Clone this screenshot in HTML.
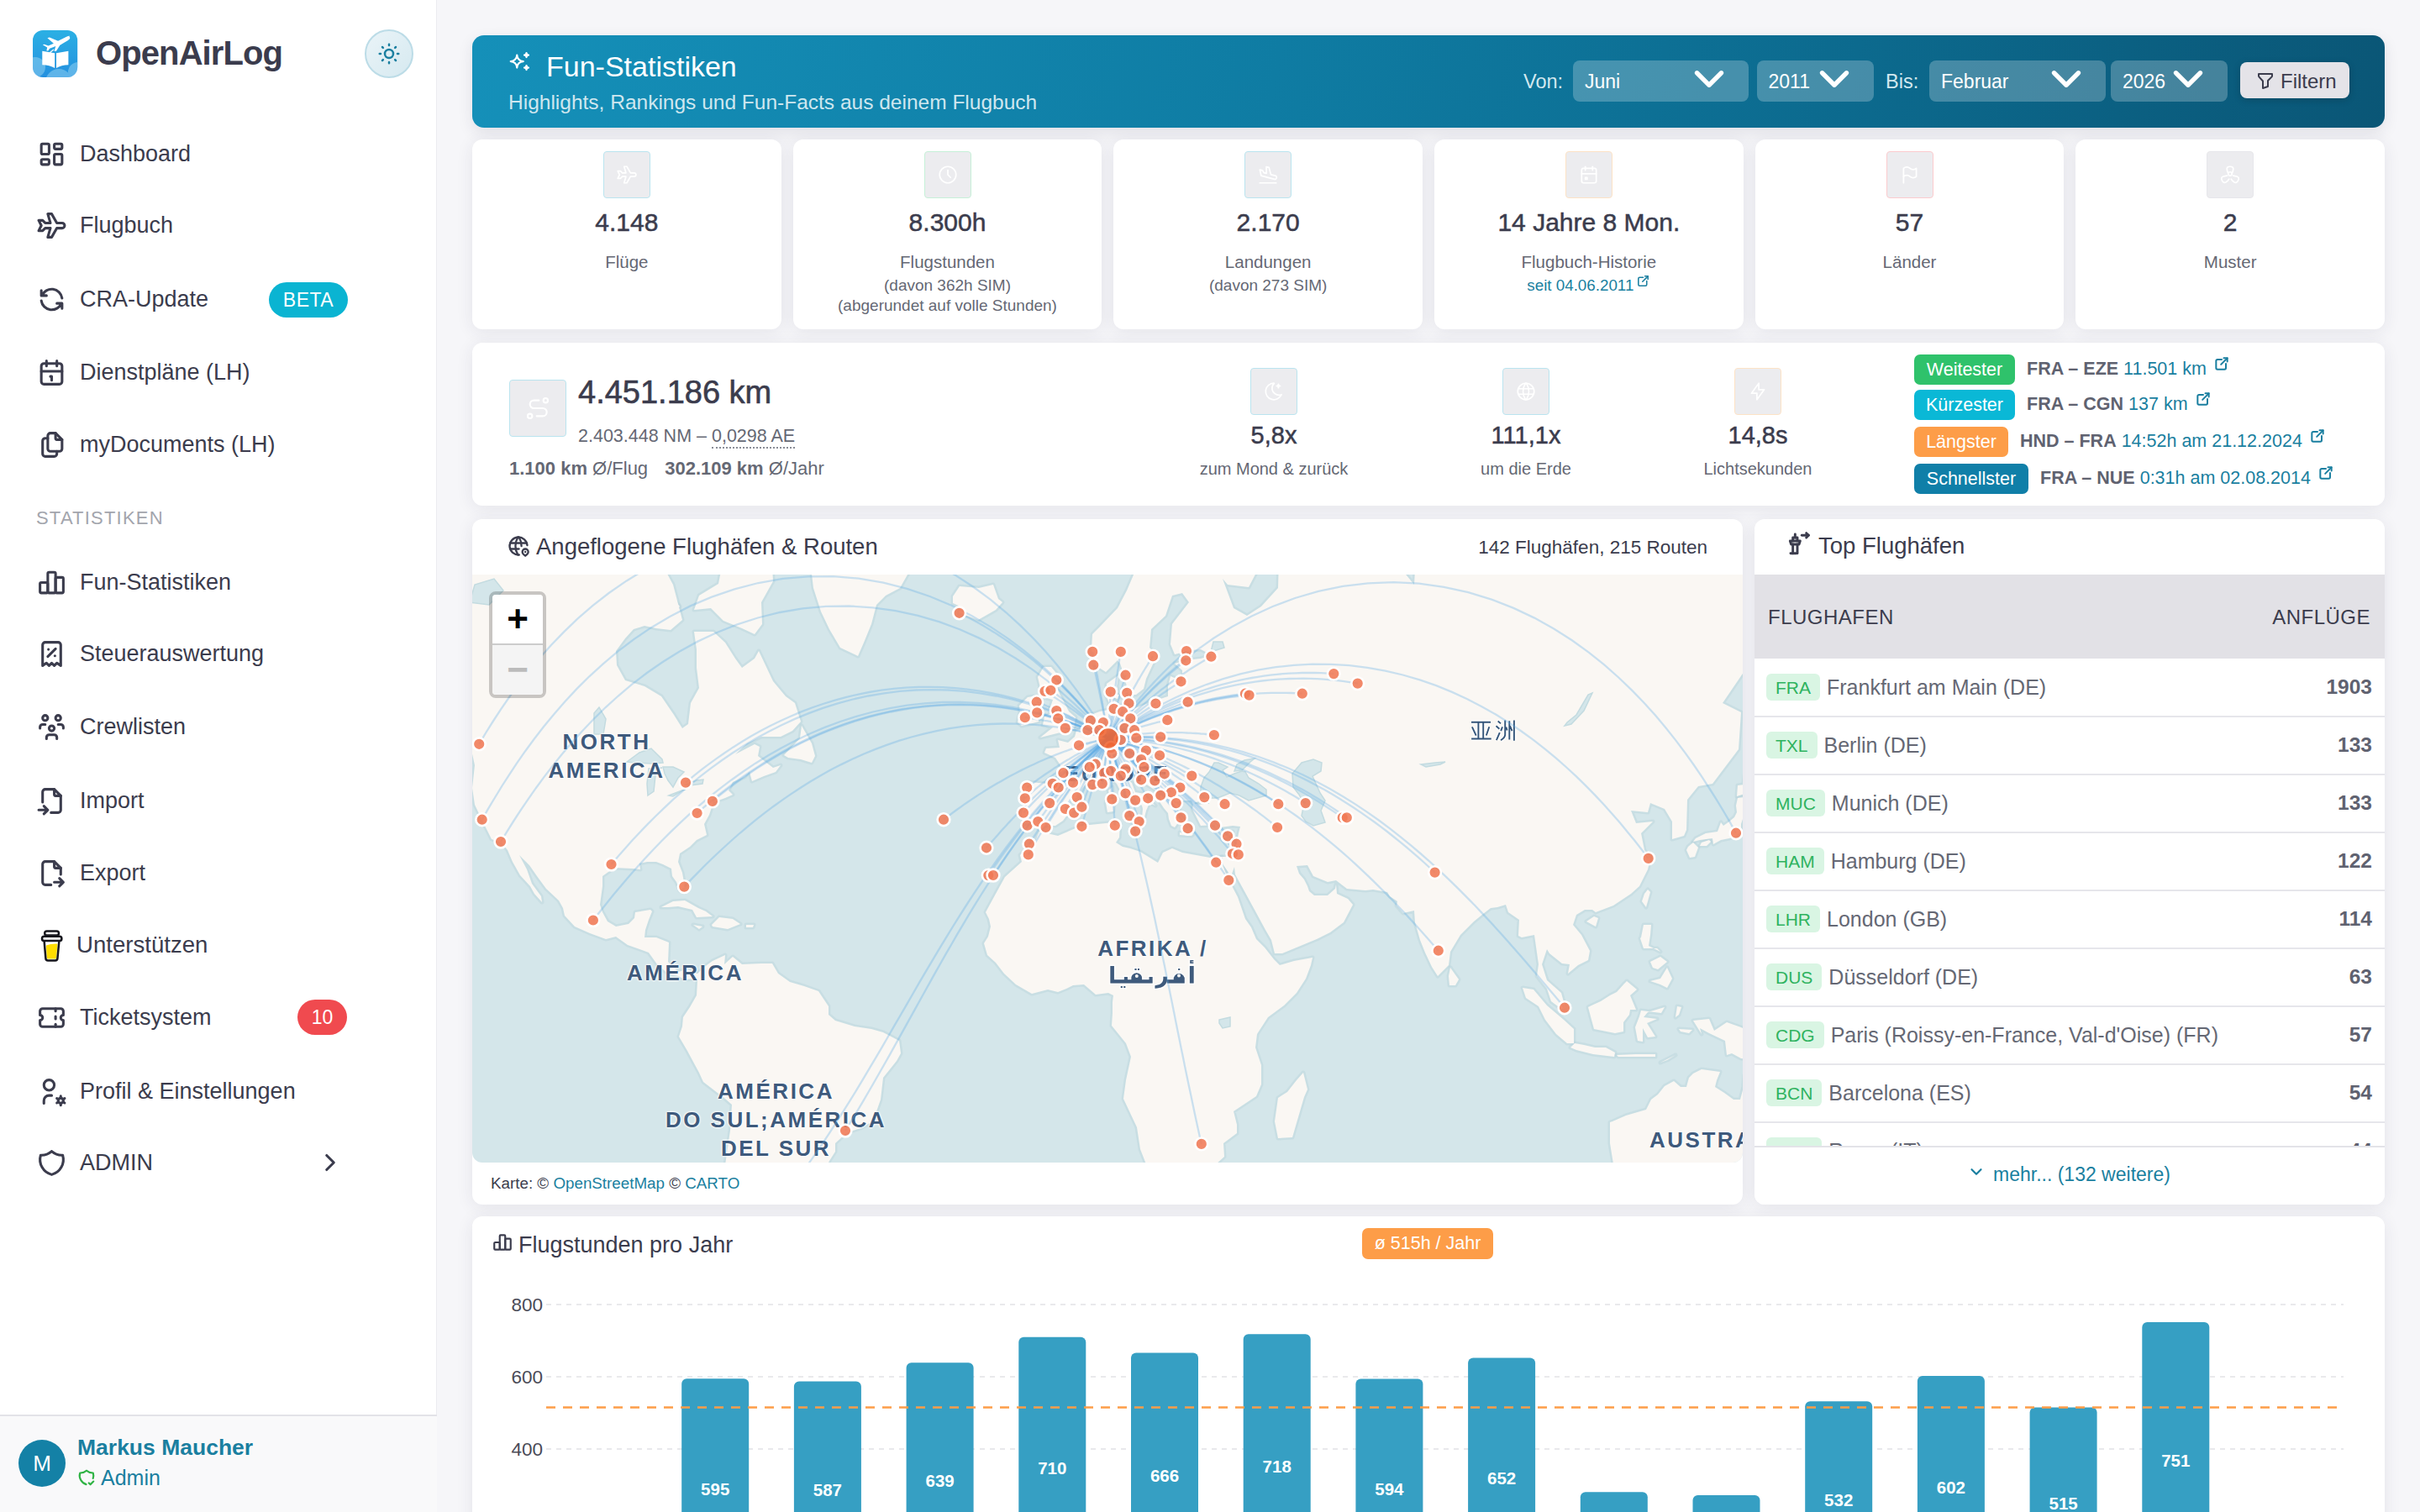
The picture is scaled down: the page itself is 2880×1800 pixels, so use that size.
<!DOCTYPE html><html><head><meta charset="utf-8"><style>
*{margin:0;padding:0;box-sizing:border-box}
html,body{margin:0;overflow:hidden;background:#f6f6f9;font-family:"Liberation Sans", sans-serif}
#root{position:relative;width:2880px;height:1800px;overflow:hidden;transform-origin:0 0;background:#f6f6f9}
.t{position:absolute;white-space:nowrap}
.ic{position:absolute;overflow:visible}
#sb{position:absolute;left:0;top:0;width:520px;height:1800px;background:#fff;border-right:1px solid #ececf0}
.pill{position:absolute;border-radius:21px;color:#fff;text-align:center}
#banner{position:absolute;left:562px;top:42px;width:2276px;height:110px;border-radius:14px;background:linear-gradient(100deg,#1590b9 0%,#0f7ca3 42%,#0c6a8e 72%,#0a5676 100%);box-shadow:0 6px 18px rgba(40,40,70,.10)}
.sel{position:absolute;top:72px;height:49px;border-radius:8px;background:rgba(255,255,255,.24)}
#filt{position:absolute;left:2666px;top:74px;width:129.5px;height:43px;border-radius:8px;background:#e4e3e8;box-shadow:0 2px 8px rgba(0,0,0,.18)}
.card{position:absolute;background:#fff;border-radius:12px;box-shadow:0 3px 20px rgba(40,40,80,.09)}
.ibox{position:absolute;background:#ececef;border:1.5px solid;border-radius:4px;opacity:.95}
.badge{position:absolute;border-radius:7px;color:#fff;font-size:21.5px;line-height:36px;text-align:center}
#map{position:absolute;left:562px;top:684px;width:1512px;height:700px;overflow:hidden;border-radius:0 0 12px 12px}
.ml{position:absolute;color:#3e5a7c;font-weight:700;font-size:26px;line-height:34px;text-align:center;letter-spacing:2.5px;text-shadow:0 0 3px #fff,0 0 3px #fff,0 0 2px #fff}
#zoomc{position:absolute;left:20px;top:20px;width:68px;height:127px;border:4px solid rgba(0,0,0,.2);border-radius:8px;background-clip:padding-box;overflow:hidden}
#zin,#zout{height:59.5px;text-align:center;font-size:44px;line-height:58px;font-weight:700}
#zin{background:#fff;color:#000;border-bottom:2px solid #ccc}
#zout{background:#f4f4f4;color:#bbb}
.row{position:absolute;left:14px;height:34px;display:flex;align-items:center;white-space:nowrap}
.code{height:32px;padding:0 11px;border-radius:6px;background:#d9f5e3;color:#2fb35f;font-size:21px;line-height:34px}
.nm{margin-left:8px;font-size:25px;color:#656874}
</style></head><body><div id="root"><div id="sb"><svg class="ic" style="left:38.6px;top:36px;width:53.2px;height:56px" viewBox="0 0 53.2 56">
<defs><linearGradient id="lg" x1="0" y1="0" x2="0" y2="1"><stop offset="0" stop-color="#2bb0e4"/><stop offset="1" stop-color="#2490df"/></linearGradient>
<clipPath id="lc"><rect width="53.2" height="56" rx="12"/></clipPath></defs>
<rect width="53.2" height="56" rx="12" fill="url(#lg)"/>
<g clip-path="url(#lc)" fill="#8fd0f0" opacity=".55"><circle cx="3" cy="44" r="12"/><circle cx="31" cy="62" r="16"/><circle cx="54" cy="50" r="12"/></g>
<path d="M11.3 24.8l14.9 2.5v17.8c-4-2.4-9-3.8-14.9-3.9z" fill="#fff"/>
<path d="M28 27.3l14.4-2.5v16.4c-5.6.1-10.4 1.5-14.4 3.9z" fill="#fff"/>
<path d="M43.2 7.8c1.8 .6 1.4 2.6-1.2 4.2l-9.6 5.8l-4.6 7.1l-2.3-.2l1.8-5.6l-7.2 2.6l-1.9 2.8l-1.8-.2l.8-3.7l-5.4-3.3l1.9-.6l4.8 1.9l6.4-2.8l-7.5-6.6l2.5-.8l10.2 4.4l10.6-5.3c1.4-.6 2.6-.8 3.5-.5z" fill="#fff"/>
<path d="M25 23c-5 3-8.5 8-9.5 14" stroke="#fff" stroke-width="1.3" fill="none"/>
</svg><div class="t " style="left:114px;top:35.0px;font-size:40px;line-height:56px;color:#3b3c4d;font-weight:700;letter-spacing:-0.9px;">OpenAirLog</div><div style="position:absolute;left:434px;top:34.5px;width:58px;height:58px;border-radius:50%;background:linear-gradient(135deg,#eaf4f8,#d6e9f0);border:2px solid #bcdce7"></div><svg class="ic" style="left:448px;top:48.5px;width:30px;height:30px" viewBox="0 0 24 24" fill="none" stroke="#1a7fa0" stroke-width="2" stroke-linecap="round" stroke-linejoin="round"><path d="M8 12a4 4 0 1 0 8 0a4 4 0 1 0 -8 0"/><path d="M3 12h1m8 -9v1m8 8h1m-9 8v1m-6.4 -15.4l.7 .7m12.1 -.7l-.7 .7m0 11.4l.7 .7m-12.1 -.7l-.7 .7"/></svg><svg class="ic" style="left:42.5px;top:164.5px;width:37px;height:37px" viewBox="0 0 24 24" fill="none" stroke="#3b3c4d" stroke-width="2" stroke-linecap="round" stroke-linejoin="round"><path d="M5 4h4a1 1 0 0 1 1 1v6a1 1 0 0 1 -1 1h-4a1 1 0 0 1 -1 -1v-6a1 1 0 0 1 1 -1"/><path d="M5 16h4a1 1 0 0 1 1 1v2a1 1 0 0 1 -1 1h-4a1 1 0 0 1 -1 -1v-2a1 1 0 0 1 1 -1"/><path d="M15 12h4a1 1 0 0 1 1 1v6a1 1 0 0 1 -1 1h-4a1 1 0 0 1 -1 -1v-6a1 1 0 0 1 1 -1"/><path d="M15 4h4a1 1 0 0 1 1 1v2a1 1 0 0 1 -1 1h-4a1 1 0 0 1 -1 -1v-2a1 1 0 0 1 1 -1"/></svg><div class="t " style="left:95px;top:164.5px;font-size:27px;line-height:37px;color:#3b3c4d;font-weight:400;">Dashboard</div><svg class="ic" style="left:42.5px;top:249.5px;width:37px;height:37px" viewBox="0 0 24 24" fill="none" stroke="#3b3c4d" stroke-width="2" stroke-linecap="round" stroke-linejoin="round"><path d="M16 10h4a2 2 0 0 1 0 4h-4l-4 7h-3l2 -7h-4l-2 2h-3l2 -4l-2 -4h3l2 2h4l-2 -7h3z"/></svg><div class="t " style="left:95px;top:249.5px;font-size:27px;line-height:37px;color:#3b3c4d;font-weight:400;">Flugbuch</div><svg class="ic" style="left:42.5px;top:337.5px;width:37px;height:37px" viewBox="0 0 24 24" fill="none" stroke="#3b3c4d" stroke-width="2" stroke-linecap="round" stroke-linejoin="round"><path d="M20 11a8.1 8.1 0 0 0 -15.5 -2m-.5 -4v4h4"/><path d="M4 13a8.1 8.1 0 0 0 15.5 2m.5 4v-4h-4"/></svg><div class="t " style="left:95px;top:337.5px;font-size:27px;line-height:37px;color:#3b3c4d;font-weight:400;">CRA-Update</div><svg class="ic" style="left:42.5px;top:424.5px;width:37px;height:37px" viewBox="0 0 24 24" fill="none" stroke="#3b3c4d" stroke-width="2" stroke-linecap="round" stroke-linejoin="round"><path d="M4 7a2 2 0 0 1 2 -2h12a2 2 0 0 1 2 2v12a2 2 0 0 1 -2 2h-12a2 2 0 0 1 -2 -2z"/><path d="M16 3v4"/><path d="M8 3v4"/><path d="M4 11h16"/><path d="M11 15h1v3"/></svg><div class="t " style="left:95px;top:424.5px;font-size:27px;line-height:37px;color:#3b3c4d;font-weight:400;">Dienstpläne (LH)</div><svg class="ic" style="left:42.5px;top:510.5px;width:37px;height:37px" viewBox="0 0 24 24" fill="none" stroke="#3b3c4d" stroke-width="2" stroke-linecap="round" stroke-linejoin="round"><path d="M15 3v4a1 1 0 0 0 1 1h4"/><path d="M18 17h-7a2 2 0 0 1 -2 -2v-10a2 2 0 0 1 2 -2h4l5 5v7a2 2 0 0 1 -2 2z"/><path d="M16 17v2a2 2 0 0 1 -2 2h-7a2 2 0 0 1 -2 -2v-10a2 2 0 0 1 2 -2h2"/></svg><div class="t " style="left:95px;top:510.5px;font-size:27px;line-height:37px;color:#3b3c4d;font-weight:400;">myDocuments (LH)</div><svg class="ic" style="left:42.5px;top:674.5px;width:37px;height:37px" viewBox="0 0 24 24" fill="none" stroke="#3b3c4d" stroke-width="2" stroke-linecap="round" stroke-linejoin="round"><path d="M3 13a1 1 0 0 1 1 -1h4a1 1 0 0 1 1 1v6a1 1 0 0 1 -1 1h-4a1 1 0 0 1 -1 -1z"/><path d="M15 9a1 1 0 0 1 1 -1h4a1 1 0 0 1 1 1v10a1 1 0 0 1 -1 1h-4a1 1 0 0 1 -1 -1z"/><path d="M9 5a1 1 0 0 1 1 -1h4a1 1 0 0 1 1 1v14a1 1 0 0 1 -1 1h-4a1 1 0 0 1 -1 -1z"/></svg><div class="t " style="left:95px;top:674.5px;font-size:27px;line-height:37px;color:#3b3c4d;font-weight:400;">Fun-Statistiken</div><svg class="ic" style="left:42.5px;top:760.0px;width:37px;height:37px" viewBox="0 0 24 24" fill="none" stroke="#3b3c4d" stroke-width="2" stroke-linecap="round" stroke-linejoin="round"><path d="M9 14l6 -6"/><path d="M9.5 8.5v.01"/><path d="M14.5 13.5v.01"/><path d="M5 21v-16a2 2 0 0 1 2 -2h10a2 2 0 0 1 2 2v16l-3 -2l-2 2l-2 -2l-2 2l-2 -2l-3 2"/></svg><div class="t " style="left:95px;top:760.0px;font-size:27px;line-height:37px;color:#3b3c4d;font-weight:400;">Steuerauswertung</div><svg class="ic" style="left:42.5px;top:846.5px;width:37px;height:37px" viewBox="0 0 24 24" fill="none" stroke="#3b3c4d" stroke-width="2" stroke-linecap="round" stroke-linejoin="round"><path d="M10 13a2 2 0 1 0 4 0a2 2 0 0 0 -4 0"/><path d="M8 21v-1a2 2 0 0 1 2 -2h4a2 2 0 0 1 2 2v1"/><path d="M15 5a2 2 0 1 0 4 0a2 2 0 0 0 -4 0"/><path d="M17 10h2a2 2 0 0 1 2 2v1"/><path d="M5 5a2 2 0 1 0 4 0a2 2 0 0 0 -4 0"/><path d="M3 13v-1a2 2 0 0 1 2 -2h2"/></svg><div class="t " style="left:95px;top:846.5px;font-size:27px;line-height:37px;color:#3b3c4d;font-weight:400;">Crewlisten</div><svg class="ic" style="left:42.5px;top:934.5px;width:37px;height:37px" viewBox="0 0 24 24" fill="none" stroke="#3b3c4d" stroke-width="2" stroke-linecap="round" stroke-linejoin="round"><path d="M14 3v4a1 1 0 0 0 1 1h4"/><path d="M5 13v-8a2 2 0 0 1 2 -2h7l5 5v11a2 2 0 0 1 -2 2h-5.5m-9.5 -2h7m-3 -3l3 3l-3 3"/></svg><div class="t " style="left:95px;top:934.5px;font-size:27px;line-height:37px;color:#3b3c4d;font-weight:400;">Import</div><svg class="ic" style="left:42.5px;top:1020.5px;width:37px;height:37px" viewBox="0 0 24 24" fill="none" stroke="#3b3c4d" stroke-width="2" stroke-linecap="round" stroke-linejoin="round"><path d="M14 3v4a1 1 0 0 0 1 1h4"/><path d="M11.5 21h-4.5a2 2 0 0 1 -2 -2v-14a2 2 0 0 1 2 -2h7l5 5v5m-5 6h7m-3 -3l3 3l-3 3"/></svg><div class="t " style="left:95px;top:1020.5px;font-size:27px;line-height:37px;color:#3b3c4d;font-weight:400;">Export</div><svg class="ic" style="left:42.5px;top:1192.5px;width:37px;height:37px" viewBox="0 0 24 24" fill="none" stroke="#3b3c4d" stroke-width="2" stroke-linecap="round" stroke-linejoin="round"><path d="M15 5v2"/><path d="M15 11v2"/><path d="M15 17v2"/><path d="M5 5h14a2 2 0 0 1 2 2v3a2 2 0 0 0 0 4v3a2 2 0 0 1 -2 2h-14a2 2 0 0 1 -2 -2v-3a2 2 0 0 0 0 -4v-3a2 2 0 0 1 2 -2"/></svg><div class="t " style="left:95px;top:1192.5px;font-size:27px;line-height:37px;color:#3b3c4d;font-weight:400;">Ticketsystem</div><svg class="ic" style="left:42.5px;top:1280.5px;width:37px;height:37px" viewBox="0 0 24 24" fill="none" stroke="#3b3c4d" stroke-width="2" stroke-linecap="round" stroke-linejoin="round"><path d="M6 21v-2a4 4 0 0 1 4 -4h2"/><path d="M6 7a4 4 0 1 0 8 0a4 4 0 0 0 -8 0"/><path d="M19 19m-2 0a2 2 0 1 0 4 0a2 2 0 1 0 -4 0"/><path d="M19 15.5v1.5"/><path d="M19 21v1.5"/><path d="M22 17.25l-1.3 .75"/><path d="M17.3 20l-1.3 .75"/><path d="M16 17.25l1.3 .75"/><path d="M20.7 20l1.3 .75"/></svg><div class="t " style="left:95px;top:1280.5px;font-size:27px;line-height:37px;color:#3b3c4d;font-weight:400;">Profil &amp; Einstellungen</div><svg class="ic" style="left:42.5px;top:1365.5px;width:37px;height:37px" viewBox="0 0 24 24" fill="none" stroke="#3b3c4d" stroke-width="2" stroke-linecap="round" stroke-linejoin="round"><path d="M12 3a12 12 0 0 0 8.5 3a12 12 0 0 1 -8.5 15a12 12 0 0 1 -8.5 -15a12 12 0 0 0 8.5 -3"/></svg><div class="t " style="left:95px;top:1365.5px;font-size:27px;line-height:37px;color:#3b3c4d;font-weight:400;">ADMIN</div><svg class="ic" style="left:47px;top:1106px;width:28px;height:40px" viewBox="0 0 28 40" fill="none" stroke="#16161d" stroke-width="2.5" stroke-linejoin="round">
<path d="M8 19.5Q14 17 21.5 17.5L20.1 34.5Q20 35.6 18.8 35.6H10Q8.8 35.6 8.7 34.5Z" fill="#ffdd00" stroke="none"/>
<path d="M5.6 14.2L7.4 35.2Q7.6 37.4 10 37.4H18.8Q21.2 37.4 21.4 35.2L23.4 14.2"/>
<rect x="3" y="8.8" width="23.4" height="5.2" rx="2.6" fill="#fff"/>
<rect x="6.2" y="2.4" width="16.8" height="5.2" rx="2.6" fill="#fff"/>
</svg><div class="t " style="left:91px;top:1105.6px;font-size:27.6px;line-height:38px;color:#3b3c4d;font-weight:400;">Unterstützen</div><div class="t " style="left:43px;top:601.5px;font-size:22px;line-height:30px;color:#a3a5ad;font-weight:400;letter-spacing:1.2px;">STATISTIKEN</div><div class="pill" style="left:320px;top:336px;width:94px;height:42px;background:#0ab4d2;font-size:23px;line-height:42px;letter-spacing:.5px">BETA</div><div class="pill" style="left:354px;top:1190px;width:59px;height:42px;background:#f04a4f;font-size:23px;line-height:42px">10</div><svg class="ic" style="left:376px;top:1367px;width:34px;height:34px" viewBox="0 0 24 24" fill="none" stroke="#3b3c4d" stroke-width="2.2" stroke-linecap="round" stroke-linejoin="round"><path d="M9 6l6 6l-6 6"/></svg><div style="position:absolute;left:0;top:1684px;width:520px;height:116px;background:#f9f9fa;border-top:2px solid #e3e3e8"></div><div style="position:absolute;left:22px;top:1714px;width:56px;height:56px;border-radius:50%;background:#1481a6;color:#fff;font-size:26px;line-height:56px;text-align:center">M</div><div class="t " style="left:92px;top:1704.5px;font-size:26.5px;line-height:37px;color:#1a7fa0;font-weight:700;">Markus Maucher</div><svg class="ic" style="left:92px;top:1748px;width:22px;height:22px" viewBox="0 0 24 24" fill="none" stroke="#2fb344" stroke-width="2.4" stroke-linecap="round" stroke-linejoin="round"><path d="M11.46 20.846a12 12 0 0 1 -7.96 -14.846a12 12 0 0 0 8.5 -3a12 12 0 0 0 8.5 3a12 12 0 0 1 -.09 7.06"/><path d="M15 19l2 2l4 -4"/></svg><div class="t " style="left:120px;top:1742.0px;font-size:25px;line-height:35px;color:#1a7fa0;font-weight:400;">Admin</div></div><div id="banner"></div><svg class="ic" style="left:604px;top:58px;width:30px;height:30px" viewBox="0 0 24 24" fill="none" stroke="#ffffff" stroke-width="1.8" stroke-linecap="round" stroke-linejoin="round"><path d="M16 18a2 2 0 0 1 2 2a2 2 0 0 1 2 -2a2 2 0 0 1 -2 -2a2 2 0 0 1 -2 2zm0 -12a2 2 0 0 1 2 2a2 2 0 0 1 2 -2a2 2 0 0 1 -2 -2a2 2 0 0 1 -2 2zm-7 12a6 6 0 0 1 6 -6a6 6 0 0 1 -6 -6a6 6 0 0 1 -6 6a6 6 0 0 1 6 6z"/></svg><div class="t " style="left:650px;top:55.5px;font-size:34px;line-height:47px;color:#ffffff;font-weight:400;">Fun-Statistiken</div><div class="t " style="left:605px;top:105.0px;font-size:24.5px;line-height:34px;color:#cfe7ef;font-weight:400;">Highlights, Rankings und Fun-Facts aus deinem Flugbuch</div><div class="t " style="left:1813px;top:80.5px;font-size:23.5px;line-height:32px;color:#d3e8ef;font-weight:400;">Von:</div><div class="t " style="left:2244px;top:80.5px;font-size:23.5px;line-height:32px;color:#d3e8ef;font-weight:400;">Bis:</div><div class="sel" style="left:1872px;width:209px"></div><div class="t " style="left:1886px;top:80.5px;font-size:23px;line-height:32px;color:#ffffff;font-weight:400;">Juni</div><svg class="ic" style="left:2005px;top:64.9px;width:58px;height:58px" viewBox="0 0 24 24" fill="none" stroke="#ffffff" stroke-width="2.2" stroke-linecap="round" stroke-linejoin="round"><path d="M6 9l6 6l6 -6"/></svg><div class="sel" style="left:2090.5px;width:139px"></div><div class="t " style="left:2104.5px;top:80.5px;font-size:23px;line-height:32px;color:#ffffff;font-weight:400;">2011</div><svg class="ic" style="left:2153.5px;top:64.9px;width:58px;height:58px" viewBox="0 0 24 24" fill="none" stroke="#ffffff" stroke-width="2.2" stroke-linecap="round" stroke-linejoin="round"><path d="M6 9l6 6l6 -6"/></svg><div class="sel" style="left:2296px;width:209.5px"></div><div class="t " style="left:2310px;top:80.5px;font-size:23px;line-height:32px;color:#ffffff;font-weight:400;">Februar</div><svg class="ic" style="left:2429.5px;top:64.9px;width:58px;height:58px" viewBox="0 0 24 24" fill="none" stroke="#ffffff" stroke-width="2.2" stroke-linecap="round" stroke-linejoin="round"><path d="M6 9l6 6l6 -6"/></svg><div class="sel" style="left:2512px;width:139px"></div><div class="t " style="left:2526px;top:80.5px;font-size:23px;line-height:32px;color:#ffffff;font-weight:400;">2026</div><svg class="ic" style="left:2575px;top:64.9px;width:58px;height:58px" viewBox="0 0 24 24" fill="none" stroke="#ffffff" stroke-width="2.2" stroke-linecap="round" stroke-linejoin="round"><path d="M6 9l6 6l6 -6"/></svg><div id="filt"></div><svg class="ic" style="left:2684px;top:84px;width:24px;height:24px" viewBox="0 0 24 24" fill="none" stroke="#3b3c4d" stroke-width="2" stroke-linecap="round" stroke-linejoin="round"><path d="M4 4h16v2.172a2 2 0 0 1 -.586 1.414l-4.414 4.414v7l-6 2v-8.5l-4.48 -4.928a2 2 0 0 1 -.52 -1.345v-2.227z"/></svg><div class="t " style="left:2714px;top:79.5px;font-size:24px;line-height:33px;color:#3b3c4d;font-weight:400;">Filtern</div><div class="card" style="left:562.0px;top:166px;width:367.7px;height:226px"></div><div class="ibox" style="left:717.8px;top:180px;width:56px;height:56px;border-color:#b7e3ef"></div><svg class="ic" style="left:732.8333333333334px;top:195px;width:26px;height:26px" viewBox="0 0 24 24" fill="none" stroke="#ffffff" stroke-width="1.6" stroke-linecap="round" stroke-linejoin="round"><path d="M16 10h4a2 2 0 0 1 0 4h-4l-4 7h-3l2 -7h-4l-2 2h-3l2 -4l-2 -4h3l2 2h4l-2 -7h3z"/></svg><div class="t " style="left:145.83333333333337px;width:1200px;text-align:center;top:244.0px;font-size:30px;line-height:42px;color:#3b3c4d;font-weight:400;-webkit-text-stroke:.5px #3b3c4d;">4.148</div><div class="t " style="left:145.83333333333337px;width:1200px;text-align:center;top:297.5px;font-size:20.5px;line-height:28px;color:#656874;font-weight:400;">Flüge</div><div class="card" style="left:943.7px;top:166px;width:367.7px;height:226px"></div><div class="ibox" style="left:1099.5px;top:180px;width:56px;height:56px;border-color:#c4f0d6"></div><svg class="ic" style="left:1114.5px;top:195px;width:26px;height:26px" viewBox="0 0 24 24" fill="none" stroke="#ffffff" stroke-width="1.6" stroke-linecap="round" stroke-linejoin="round"><path d="M3 12a9 9 0 1 0 18 0a9 9 0 0 0 -18 0"/><path d="M12 7v5l3 3"/></svg><div class="t " style="left:527.5px;width:1200px;text-align:center;top:244.0px;font-size:30px;line-height:42px;color:#3b3c4d;font-weight:400;-webkit-text-stroke:.5px #3b3c4d;">8.300h</div><div class="t " style="left:527.5px;width:1200px;text-align:center;top:297.5px;font-size:20.5px;line-height:28px;color:#656874;font-weight:400;">Flugstunden</div><div class="t " style="left:527.5px;width:1200px;text-align:center;top:326.5px;font-size:19px;line-height:26px;color:#656874;font-weight:400;">(davon 362h SIM)</div><div class="t " style="left:527.5px;width:1200px;text-align:center;top:350.5px;font-size:19px;line-height:26px;color:#656874;font-weight:400;">(abgerundet auf volle Stunden)</div><div class="card" style="left:1325.3px;top:166px;width:367.7px;height:226px"></div><div class="ibox" style="left:1481.2px;top:180px;width:56px;height:56px;border-color:#b7e3ef"></div><svg class="ic" style="left:1496.1666666666667px;top:195px;width:26px;height:26px" viewBox="0 0 24 24" fill="none" stroke="#ffffff" stroke-width="1.6" stroke-linecap="round" stroke-linejoin="round"><path d="M15.157 11.81l4.83 1.295a2 2 0 1 1 -1.036 3.863l-14.489 -3.882l-1.345 -6.572l2.898 .776l1.414 2.45l2.898 .776l-.12 -7.279l2.898 .777l2.052 7.797z"/><path d="M3 21h18"/></svg><div class="t " style="left:909.1666666666667px;width:1200px;text-align:center;top:244.0px;font-size:30px;line-height:42px;color:#3b3c4d;font-weight:400;-webkit-text-stroke:.5px #3b3c4d;">2.170</div><div class="t " style="left:909.1666666666667px;width:1200px;text-align:center;top:297.5px;font-size:20.5px;line-height:28px;color:#656874;font-weight:400;">Landungen</div><div class="t " style="left:909.1666666666667px;width:1200px;text-align:center;top:326.5px;font-size:19px;line-height:26px;color:#656874;font-weight:400;">(davon 273 SIM)</div><div class="card" style="left:1707.0px;top:166px;width:367.7px;height:226px"></div><div class="ibox" style="left:1862.8px;top:180px;width:56px;height:56px;border-color:#fde1c4"></div><svg class="ic" style="left:1877.8333333333333px;top:195px;width:26px;height:26px" viewBox="0 0 24 24" fill="none" stroke="#ffffff" stroke-width="1.6" stroke-linecap="round" stroke-linejoin="round"><path d="M4 7a2 2 0 0 1 2 -2h12a2 2 0 0 1 2 2v12a2 2 0 0 1 -2 2h-12a2 2 0 0 1 -2 -2z"/><path d="M16 3v4"/><path d="M8 3v4"/><path d="M4 11h16"/><path d="M8 15h2v2h-2z"/></svg><div class="t " style="left:1290.8333333333333px;width:1200px;text-align:center;top:244.0px;font-size:30px;line-height:42px;color:#3b3c4d;font-weight:400;-webkit-text-stroke:.5px #3b3c4d;">14 Jahre 8 Mon.</div><div class="t " style="left:1290.8333333333333px;width:1200px;text-align:center;top:297.5px;font-size:20.5px;line-height:28px;color:#656874;font-weight:400;">Flugbuch-Historie</div><div class="t " style="left:1280.8333333333333px;width:1200px;text-align:center;top:326.5px;font-size:18.8px;line-height:26px;color:#1a7fa0;font-weight:400;">seit 04.06.2011</div><svg class="ic" style="left:1946.8333333333333px;top:325.5px;width:17px;height:17px" viewBox="0 0 24 24" fill="none" stroke="#1a7fa0" stroke-width="2.2" stroke-linecap="round" stroke-linejoin="round"><path d="M12 6h-6a2 2 0 0 0 -2 2v10a2 2 0 0 0 2 2h10a2 2 0 0 0 2 -2v-6"/><path d="M11 13l9 -9"/><path d="M15 4h5v5"/></svg><div class="card" style="left:2088.7px;top:166px;width:367.7px;height:226px"></div><div class="ibox" style="left:2244.5px;top:180px;width:56px;height:56px;border-color:#fbc9cc"></div><svg class="ic" style="left:2259.5000000000005px;top:195px;width:26px;height:26px" viewBox="0 0 24 24" fill="none" stroke="#ffffff" stroke-width="1.6" stroke-linecap="round" stroke-linejoin="round"><path d="M5 5a5 5 0 0 1 7 0a5 5 0 0 0 7 0v9a5 5 0 0 1 -7 0a5 5 0 0 0 -7 0v-9z"/><path d="M5 21v-7"/></svg><div class="t " style="left:1672.5000000000005px;width:1200px;text-align:center;top:244.0px;font-size:30px;line-height:42px;color:#3b3c4d;font-weight:400;-webkit-text-stroke:.5px #3b3c4d;">57</div><div class="t " style="left:1672.5000000000005px;width:1200px;text-align:center;top:297.5px;font-size:20.5px;line-height:28px;color:#656874;font-weight:400;">Länder</div><div class="card" style="left:2470.3px;top:166px;width:367.7px;height:226px"></div><div class="ibox" style="left:2626.2px;top:180px;width:56px;height:56px;border-color:#e5e5ea"></div><svg class="ic" style="left:2641.166666666667px;top:195px;width:26px;height:26px" viewBox="0 0 24 24" fill="none" stroke="#ffffff" stroke-width="1.6" stroke-linecap="round" stroke-linejoin="round"><path d="M12 13a2 2 0 1 0 0 -4a2 2 0 0 0 0 4z"/><path d="M14.167 10.5c.722 -1.538 1.156 -3.043 1.303 -4.514c.22 -1.63 -.762 -2.986 -3.47 -2.986s-3.69 1.357 -3.47 2.986c.147 1.471 .581 2.976 1.303 4.514"/><path d="M13.169 16.751c.97 1.395 2.057 2.523 3.257 3.386c1.3 1.005 2.967 .833 4.321 -1.512c1.354 -2.345 .67 -3.874 -.85 -4.498c-1.348 -.608 -2.868 -.985 -4.562 -1.128"/><path d="M8.664 13c-1.693 .143 -3.213 .52 -4.56 1.128c-1.522 .623 -2.206 2.153 -.852 4.498s3.02 2.517 4.321 1.512c1.2 -.863 2.287 -1.991 3.258 -3.386"/></svg><div class="t " style="left:2054.166666666667px;width:1200px;text-align:center;top:244.0px;font-size:30px;line-height:42px;color:#3b3c4d;font-weight:400;-webkit-text-stroke:.5px #3b3c4d;">2</div><div class="t " style="left:2054.166666666667px;width:1200px;text-align:center;top:297.5px;font-size:20.5px;line-height:28px;color:#656874;font-weight:400;">Muster</div><div class="card" style="left:562px;top:408px;width:2276px;height:194px"></div><div class="ibox" style="left:606px;top:452px;width:68px;height:68px;border-color:#b7e3ef"></div><svg class="ic" style="left:624px;top:470px;width:32px;height:32px" viewBox="0 0 24 24" fill="none" stroke="#ffffff" stroke-width="1.6" stroke-linecap="round" stroke-linejoin="round"><path d="M3 19a2 2 0 1 0 4 0a2 2 0 0 0 -4 0"/><path d="M19 7a2 2 0 1 0 0 -4a2 2 0 0 0 0 4z"/><path d="M11 19h5.5a3.5 3.5 0 0 0 0 -7h-8a3.5 3.5 0 0 1 0 -7h4.5"/></svg><div class="t " style="left:688px;top:440.5px;font-size:38px;line-height:53px;color:#3b3c4d;font-weight:400;-webkit-text-stroke:.6px #3b3c4d;">4.451.186 km</div><div class="t " style="left:688px;top:503.5px;font-size:21.5px;line-height:30px;color:#656874;font-weight:400;">2.403.448 NM – <span style="border-bottom:2px dotted #8a8d97;padding-bottom:1px">0,0298 AE</span></div><div class="t " style="left:606px;top:543.0px;font-size:22px;line-height:30px;color:#656874;font-weight:400;"><b style="font-weight:700">1.100 km</b> Ø/Flug <span style="display:inline-block;width:14px"></span><b style="font-weight:700">302.109 km</b> Ø/Jahr</div><div class="ibox" style="left:1488px;top:438px;width:56px;height:56px;border-color:#b7e3ef"></div><svg class="ic" style="left:1503px;top:453px;width:26px;height:26px" viewBox="0 0 24 24" fill="none" stroke="#ffffff" stroke-width="1.6" stroke-linecap="round" stroke-linejoin="round"><path d="M12 3c.132 0 .263 0 .393 0a7.5 7.5 0 0 0 7.92 12.446a9 9 0 1 1 -8.313 -12.454z"/><path d="M17 4a2 2 0 0 0 2 2a2 2 0 0 0 -2 2a2 2 0 0 0 -2 -2a2 2 0 0 0 2 -2"/></svg><div class="t " style="left:916px;width:1200px;text-align:center;top:498.0px;font-size:29px;line-height:40px;color:#3b3c4d;font-weight:400;-webkit-text-stroke:.5px #3b3c4d;">5,8x</div><div class="t " style="left:916px;width:1200px;text-align:center;top:544.0px;font-size:20px;line-height:28px;color:#656874;font-weight:400;">zum Mond &amp; zurück</div><div class="ibox" style="left:1788px;top:438px;width:56px;height:56px;border-color:#b7e3ef"></div><svg class="ic" style="left:1803px;top:453px;width:26px;height:26px" viewBox="0 0 24 24" fill="none" stroke="#ffffff" stroke-width="1.6" stroke-linecap="round" stroke-linejoin="round"><path d="M3 12a9 9 0 1 0 18 0a9 9 0 0 0 -18 0"/><path d="M3.6 9h16.8"/><path d="M3.6 15h16.8"/><path d="M11.5 3a17 17 0 0 0 0 18"/><path d="M12.5 3a17 17 0 0 1 0 18"/></svg><div class="t " style="left:1216px;width:1200px;text-align:center;top:498.0px;font-size:29px;line-height:40px;color:#3b3c4d;font-weight:400;-webkit-text-stroke:.5px #3b3c4d;">111,1x</div><div class="t " style="left:1216px;width:1200px;text-align:center;top:544.0px;font-size:20px;line-height:28px;color:#656874;font-weight:400;">um die Erde</div><div class="ibox" style="left:2064px;top:438px;width:56px;height:56px;border-color:#fde1c4"></div><svg class="ic" style="left:2079px;top:453px;width:26px;height:26px" viewBox="0 0 24 24" fill="none" stroke="#ffffff" stroke-width="1.6" stroke-linecap="round" stroke-linejoin="round"><path d="M13 3v7h6l-8 11v-7h-6l8 -11"/></svg><div class="t " style="left:1492px;width:1200px;text-align:center;top:498.0px;font-size:29px;line-height:40px;color:#3b3c4d;font-weight:400;-webkit-text-stroke:.5px #3b3c4d;">14,8s</div><div class="t " style="left:1492px;width:1200px;text-align:center;top:544.0px;font-size:20px;line-height:28px;color:#656874;font-weight:400;">Lichtsekunden</div><div class="badge" style="left:2278px;top:422px;width:120px;height:36px;background:#2fc26b">Weitester</div><div class="t " style="left:2412px;top:422.5px;font-size:21.5px;line-height:30px;color:#5f6270;font-weight:400;"><b style="font-weight:700;color:#5f6270">FRA – EZE</b> <span style="color:#1a7fa0">11.501 km</span><svg style="width:20px;height:20px;vertical-align:3px;margin-left:8px" viewBox="0 0 24 24" fill="none" stroke="#1a7fa0" stroke-width="2.4" stroke-linecap="round" stroke-linejoin="round"><path d="M12 6h-6a2 2 0 0 0 -2 2v10a2 2 0 0 0 2 2h10a2 2 0 0 0 2 -2v-6"/><path d="M11 13l9 -9"/><path d="M15 4h5v5"/></svg></div><div class="badge" style="left:2278px;top:464px;width:120px;height:36px;background:#0ab8d6">Kürzester</div><div class="t " style="left:2412px;top:464.5px;font-size:21.5px;line-height:30px;color:#5f6270;font-weight:400;"><b style="font-weight:700;color:#5f6270">FRA – CGN</b> <span style="color:#1a7fa0">137 km</span><svg style="width:20px;height:20px;vertical-align:3px;margin-left:8px" viewBox="0 0 24 24" fill="none" stroke="#1a7fa0" stroke-width="2.4" stroke-linecap="round" stroke-linejoin="round"><path d="M12 6h-6a2 2 0 0 0 -2 2v10a2 2 0 0 0 2 2h10a2 2 0 0 0 2 -2v-6"/><path d="M11 13l9 -9"/><path d="M15 4h5v5"/></svg></div><div class="badge" style="left:2278px;top:508px;width:112px;height:36px;background:#fd9d48">Längster</div><div class="t " style="left:2404px;top:508.5px;font-size:21.5px;line-height:30px;color:#5f6270;font-weight:400;"><b style="font-weight:700;color:#5f6270">HND – FRA</b> <span style="color:#1a7fa0">14:52h am 21.12.2024</span><svg style="width:20px;height:20px;vertical-align:3px;margin-left:8px" viewBox="0 0 24 24" fill="none" stroke="#1a7fa0" stroke-width="2.4" stroke-linecap="round" stroke-linejoin="round"><path d="M12 6h-6a2 2 0 0 0 -2 2v10a2 2 0 0 0 2 2h10a2 2 0 0 0 2 -2v-6"/><path d="M11 13l9 -9"/><path d="M15 4h5v5"/></svg></div><div class="badge" style="left:2278px;top:552px;width:136px;height:36px;background:#107fa8">Schnellster</div><div class="t " style="left:2428px;top:552.5px;font-size:21.5px;line-height:30px;color:#5f6270;font-weight:400;"><b style="font-weight:700;color:#5f6270">FRA – NUE</b> <span style="color:#1a7fa0">0:31h am 02.08.2014</span><svg style="width:20px;height:20px;vertical-align:3px;margin-left:8px" viewBox="0 0 24 24" fill="none" stroke="#1a7fa0" stroke-width="2.4" stroke-linecap="round" stroke-linejoin="round"><path d="M12 6h-6a2 2 0 0 0 -2 2v10a2 2 0 0 0 2 2h10a2 2 0 0 0 2 -2v-6"/><path d="M11 13l9 -9"/><path d="M15 4h5v5"/></svg></div><div class="card" style="left:562px;top:618px;width:1512px;height:816px"></div><svg class="ic" style="left:603px;top:636px;width:28px;height:28px" viewBox="0 0 24 24" fill="none" stroke="#3b3c4d" stroke-width="2" stroke-linecap="round" stroke-linejoin="round"><path d="M20.972 11.291a9 9 0 1 0 -8.322 9.686"/><path d="M3.6 9h16.8"/><path d="M3.6 15h8.9"/><path d="M11.5 3a17 17 0 0 0 0 18"/><path d="M12.5 3a16.986 16.986 0 0 1 2.578 9.018"/><path d="M21.121 20.121a3 3 0 1 0 -4.242 0c.418 .419 1.125 1.045 2.121 1.879c1.051 -.89 1.759 -1.516 2.121 -1.879z"/><path d="M19 18v.01"/></svg><div class="t " style="left:638px;top:632.0px;font-size:27.5px;line-height:38px;color:#3b3c4d;font-weight:400;">Angeflogene Flughäfen &amp; Routen</div><div class="t " style="left:832px;width:1200px;text-align:right;top:635.5px;font-size:22.5px;line-height:31px;color:#3b3c4d;font-weight:400;">142 Flughäfen, 215 Routen</div><div id="map"><svg width="1512" height="700" viewBox="0 0 1512 700" style="position:absolute;left:0;top:0">
<rect width="1512" height="700" fill="#d4e6ea"/>
<g fill="none" stroke="#b3cfd7" stroke-width="5" stroke-opacity=".35" stroke-linejoin="round"><path d="M-259 -137L208 -137L219 -25L239 12L250 54L236 66L219 64L205 61L192 65L182 76L171 91L172 108L182 126L205 133L225 145L240 167L250 183L257 178L260 153L270 135L267 111L267 89L264 68L287 68L301 81L313 100L321 111L336 100L341 91L358 127L373 145L384 153L391 175L381 186L367 193L344 193L327 201L313 214L336 202L342 205L340 216L358 230L367 227L361 235L347 240L333 246L330 235L324 241L310 247L305 257L310 262L301 266L287 271L282 286L276 297L279 310L267 316L259 324L247 332L245 342L250 355L253 372L247 376L243 366L238 359L237 350L227 345L219 342L208 342L199 344L200 351L191 350L169 349L155 359L155 371L152 393L155 402L161 413L171 419L186 416L193 409L194 402L212 399L214 401L210 411L208 417L206 423L205 432L219 432L234 438L233 461L245 473L256 470L267 475L264 481L253 482L245 478L233 475L220 464L210 450L202 447L185 441L171 431L159 434L140 427L122 419L110 406L108 397L103 388L88 374L77 359L68 346L56 334L65 351L71 368L82 383L83 390L74 380L69 371L57 358L48 342L42 328L35 319L23 315L11 291L3 274L-0 254L3 227L-1 209L-20 187L-34 153L-48 122L-88 97L-145 83L-230 89L-259 19Z"/><path d="M268 475L279 465L286 460L301 453L300 464L310 455L321 464L344 463L357 463L364 475L378 485L395 490L412 496L424 514L424 524L432 531L455 538L475 541L489 545L508 555L510 570L505 579L489 599L486 625L480 642L475 652L462 659L450 663L445 665L432 677L432 687L425 698L421 706L412 717L404 728L390 736L381 744L378 762L355 765L338 788L321 853L282 853L290 751L301 703L307 662L309 631L301 624L275 604L270 593L256 567L246 550L250 538L251 527L259 515L267 501L268 484L264 475Z"/><path d="M658 297L654 285L658 266L655 253L663 247L685 249L698 249L701 240L700 227L694 218L681 212L683 207L699 206L697 197L709 200L717 193L719 186L726 183L732 176L736 167L747 163L757 161L758 153L754 143L755 130L769 120L767 133L768 136L763 148L765 151L771 158L787 156L789 159L813 150L828 145L828 133L831 121L845 127L845 114L836 106L849 102L867 100L880 96L867 89L856 90L836 95L831 83L833 59L853 33L845 22L833 25L825 49L808 65L806 87L815 96L802 124L799 136L790 143L781 143L776 120L771 106L768 102L754 116L740 107L737 90L738 71L748 61L768 40L779 19L788 -2L799 -25L896 -33L936 -8L924 15L899 12L893 5L906 40L922 49L939 38L959 16L960 -19L1021 -18L1050 -25L1084 -33L1121 12L1123 -22L1135 -77L1732 -77L1732 71L1647 95L1630 138L1601 186L1596 127L1618 77L1573 104L1522 103L1488 153L1510 164L1507 208L1476 249L1459 252L1446 268L1445 304L1442 311L1428 315L1428 294L1419 279L1402 272L1399 283L1379 281L1385 296L1405 294L1391 308L1395 328L1402 338L1399 351L1389 371L1379 380L1358 394L1337 402L1333 399L1324 399L1314 405L1310 417L1320 429L1330 448L1328 459L1316 465L1304 475L1306 464L1297 463L1282 451L1279 446L1273 464L1279 483L1296 498L1301 516L1296 517L1284 508L1279 493L1267 478L1269 464L1264 429L1249 432L1245 430L1246 411L1233 402L1230 393L1220 396L1212 397L1203 404L1192 413L1176 429L1164 449L1162 465L1149 478L1142 467L1134 450L1128 435L1122 414L1121 400L1108 403L1100 394L1101 389L1092 383L1089 378L1072 375L1063 376L1041 374L1028 364L1018 366L1001 359L994 346L981 347L984 356L990 363L994 371L996 377L1002 382L1018 382L1027 374L1028 369L1029 380L1042 386L1048 393L1037 414L1021 426L1005 434L964 451L955 451L951 435L944 423L931 399L919 377L908 357L907 348L903 359L894 346L892 336L903 336L906 331L910 319L912 308L914 300L905 299L890 301L883 298L867 299L863 291L857 279L858 274L856 269L845 269L838 271L842 279L839 290L843 291L836 301L832 299L829 291L828 284L823 278L819 272L819 262L815 258L801 249L795 242L786 236L787 232L778 233L778 243L785 248L789 259L800 261L804 267L813 275L806 272L802 281L800 289L797 290L798 279L797 275L790 269L782 266L778 263L771 257L767 249L759 242L751 246L739 250L730 249L725 256L721 265L713 268L706 279L709 285L703 293L694 299L683 299L676 304L672 301L666 296Z"/><path d="M675 306L697 311L725 299L764 295L771 297L770 313L766 319L774 324L783 326L795 330L816 343L822 331L833 326L845 331L878 337L892 336L893 346L899 361L911 384L920 410L927 420L933 434L943 444L954 458L961 465L978 460L1000 456L998 465L992 481L981 498L966 513L947 527L934 547L932 563L939 584L939 607L933 621L918 631L906 639L910 655L910 665L894 677L895 693L885 702L865 725L822 737L813 731L809 720L795 684L791 658L775 624L778 602L784 574L778 558L761 537L762 522L762 509L763 501L757 498L742 500L728 488L715 489L707 493L697 497L685 494L666 499L647 488L633 475L623 462L613 453L609 439L614 431L617 419L615 410L611 402L623 380L634 360L654 342L652 334L665 321L670 318L673 310Z"/><path d="M358 8L344 33L345 59L336 71L321 64L299 55L284 40L264 42L270 25L293 11L296 -4L282 -25L264 -50L355 -50Z"/><path d="M213 46L219 22L230 19L247 38L233 51L222 56Z"/><path d="M459 97L438 87L425 65L415 44L406 16L402 -18L395 -77L594 -77L583 -45L560 -19L526 -14L509 16L492 25L481 36L475 59L466 81Z"/><path d="M572 26L580 14L603 16L620 12L626 29L631 33L623 42L602 54L589 49L579 47L581 38L572 34Z"/><path d="M225 396L239 389L253 388L269 397L278 401L286 407L267 408L262 399L245 395L233 396Z"/><path d="M285 417L294 408L310 410L319 416L304 422L286 419Z"/><path d="M263 417L274 419L270 422Z"/><path d="M326 417L335 417L334 420L326 420Z"/><path d="M371 215L390 195L392 180L404 201L408 216L404 224L391 220L376 218Z"/><path d="M-22 187L-3 192L7 209L-6 204Z"/><path d="M1516 229L1525 224L1522 199L1531 203L1522 176L1519 155L1516 167L1517 203L1515 220Z"/><path d="M1505 264L1511 262L1523 260L1537 250L1527 244L1515 233L1513 250L1506 251Z"/><path d="M1453 318L1461 316L1476 314L1477 321L1486 316L1496 314L1504 311L1510 306L1510 297L1513 288L1516 278L1513 265L1506 266L1504 275L1505 283L1502 289L1496 294L1489 299L1486 295L1482 306L1468 308L1456 314Z"/><path d="M1447 324L1453 319L1459 325L1455 336L1449 337L1445 328Z"/><path d="M1461 323L1469 323L1474 318L1472 316L1463 319Z"/><path d="M1392 389L1397 396L1402 378L1399 375L1395 380Z"/><path d="M1326 413L1337 419L1340 409L1335 407Z"/><path d="M1391 432L1394 417L1403 417L1402 429L1400 442L1414 449L1410 445L1394 445L1390 433Z"/><path d="M1402 484L1414 481L1422 468L1428 481L1422 492L1414 488Z"/><path d="M1402 461L1414 455L1422 461L1411 470L1405 468Z"/><path d="M1328 515L1332 530L1335 541L1360 546L1370 544L1370 533L1377 524L1378 518L1385 518L1378 501L1386 494L1374 484L1371 487L1362 497L1354 501L1343 508L1332 513Z"/><path d="M1250 492L1263 494L1279 513L1299 530L1311 541L1311 558L1303 558L1290 547L1277 530L1269 514L1254 504Z"/><path d="M1307 563L1312 558L1323 560L1336 563L1349 563L1360 569L1359 574L1334 571L1314 566Z"/><path d="M1362 572L1385 571L1408 571L1408 574L1385 574L1364 574Z"/><path d="M1414 581L1432 572L1422 578Z"/><path d="M1387 555L1393 556L1393 540L1399 551L1408 550L1398 534L1410 529L1394 527L1399 521L1419 515L1415 522L1391 519L1389 526L1384 539Z"/><path d="M1434 514L1439 515L1436 524L1432 527Z"/><path d="M1436 541L1452 542L1448 546L1438 544Z"/><path d="M1453 531L1472 529L1478 543L1493 533L1510 539L1538 552L1547 559L1539 570L1525 575L1516 577L1510 576L1499 570L1493 572L1491 555L1472 546L1461 540L1463 547Z"/><path d="M1354 652L1357 651L1373 644L1397 637L1403 625L1411 619L1419 609L1430 603L1438 610L1445 610L1448 599L1453 594L1463 589L1485 592L1481 602L1479 610L1490 617L1501 625L1509 625L1513 610L1514 596L1519 585L1525 598L1535 610L1540 634L1556 646L1579 671L1581 693L1581 716L1362 726L1354 677Z"/><path d="M1162 478L1164 468L1174 482L1170 489L1163 489Z"/><path d="M959 671L976 670L990 622L994 613L989 593L981 602L970 616L959 623L955 651Z"/><path d="M676 194L688 191L716 184L718 170L710 163L707 157L699 142L696 133L698 121L689 110L680 110L673 122L676 135L680 146L691 149L688 158L692 164L681 169L679 179L691 182Z"/><path d="M674 175L674 159L677 152L668 145L661 146L651 156L652 164L649 176L654 180L663 178Z"/><path d="M779 289L797 288L794 299L779 293Z"/><path d="M755 268L764 267L763 282L756 283L754 272Z"/><path d="M757 257L762 253L762 260L761 265L758 261Z"/><path d="M842 307L858 309L856 311L842 310Z"/><path d="M892 313L905 306L901 311L895 314Z"/><path d="M770 141L780 138L779 146L772 146Z"/><path d="M764 143L770 143L768 148L765 147Z"/></g>
<g fill="#faf7f3"><path d="M-259 -137L208 -137L219 -25L239 12L250 54L236 66L219 64L205 61L192 65L182 76L171 91L172 108L182 126L205 133L225 145L240 167L250 183L257 178L260 153L270 135L267 111L267 89L264 68L287 68L301 81L313 100L321 111L336 100L341 91L358 127L373 145L384 153L391 175L381 186L367 193L344 193L327 201L313 214L336 202L342 205L340 216L358 230L367 227L361 235L347 240L333 246L330 235L324 241L310 247L305 257L310 262L301 266L287 271L282 286L276 297L279 310L267 316L259 324L247 332L245 342L250 355L253 372L247 376L243 366L238 359L237 350L227 345L219 342L208 342L199 344L200 351L191 350L169 349L155 359L155 371L152 393L155 402L161 413L171 419L186 416L193 409L194 402L212 399L214 401L210 411L208 417L206 423L205 432L219 432L234 438L233 461L245 473L256 470L267 475L264 481L253 482L245 478L233 475L220 464L210 450L202 447L185 441L171 431L159 434L140 427L122 419L110 406L108 397L103 388L88 374L77 359L68 346L56 334L65 351L71 368L82 383L83 390L74 380L69 371L57 358L48 342L42 328L35 319L23 315L11 291L3 274L-0 254L3 227L-1 209L-20 187L-34 153L-48 122L-88 97L-145 83L-230 89L-259 19Z"/><path d="M268 475L279 465L286 460L301 453L300 464L310 455L321 464L344 463L357 463L364 475L378 485L395 490L412 496L424 514L424 524L432 531L455 538L475 541L489 545L508 555L510 570L505 579L489 599L486 625L480 642L475 652L462 659L450 663L445 665L432 677L432 687L425 698L421 706L412 717L404 728L390 736L381 744L378 762L355 765L338 788L321 853L282 853L290 751L301 703L307 662L309 631L301 624L275 604L270 593L256 567L246 550L250 538L251 527L259 515L267 501L268 484L264 475Z"/><path d="M658 297L654 285L658 266L655 253L663 247L685 249L698 249L701 240L700 227L694 218L681 212L683 207L699 206L697 197L709 200L717 193L719 186L726 183L732 176L736 167L747 163L757 161L758 153L754 143L755 130L769 120L767 133L768 136L763 148L765 151L771 158L787 156L789 159L813 150L828 145L828 133L831 121L845 127L845 114L836 106L849 102L867 100L880 96L867 89L856 90L836 95L831 83L833 59L853 33L845 22L833 25L825 49L808 65L806 87L815 96L802 124L799 136L790 143L781 143L776 120L771 106L768 102L754 116L740 107L737 90L738 71L748 61L768 40L779 19L788 -2L799 -25L896 -33L936 -8L924 15L899 12L893 5L906 40L922 49L939 38L959 16L960 -19L1021 -18L1050 -25L1084 -33L1121 12L1123 -22L1135 -77L1732 -77L1732 71L1647 95L1630 138L1601 186L1596 127L1618 77L1573 104L1522 103L1488 153L1510 164L1507 208L1476 249L1459 252L1446 268L1445 304L1442 311L1428 315L1428 294L1419 279L1402 272L1399 283L1379 281L1385 296L1405 294L1391 308L1395 328L1402 338L1399 351L1389 371L1379 380L1358 394L1337 402L1333 399L1324 399L1314 405L1310 417L1320 429L1330 448L1328 459L1316 465L1304 475L1306 464L1297 463L1282 451L1279 446L1273 464L1279 483L1296 498L1301 516L1296 517L1284 508L1279 493L1267 478L1269 464L1264 429L1249 432L1245 430L1246 411L1233 402L1230 393L1220 396L1212 397L1203 404L1192 413L1176 429L1164 449L1162 465L1149 478L1142 467L1134 450L1128 435L1122 414L1121 400L1108 403L1100 394L1101 389L1092 383L1089 378L1072 375L1063 376L1041 374L1028 364L1018 366L1001 359L994 346L981 347L984 356L990 363L994 371L996 377L1002 382L1018 382L1027 374L1028 369L1029 380L1042 386L1048 393L1037 414L1021 426L1005 434L964 451L955 451L951 435L944 423L931 399L919 377L908 357L907 348L903 359L894 346L892 336L903 336L906 331L910 319L912 308L914 300L905 299L890 301L883 298L867 299L863 291L857 279L858 274L856 269L845 269L838 271L842 279L839 290L843 291L836 301L832 299L829 291L828 284L823 278L819 272L819 262L815 258L801 249L795 242L786 236L787 232L778 233L778 243L785 248L789 259L800 261L804 267L813 275L806 272L802 281L800 289L797 290L798 279L797 275L790 269L782 266L778 263L771 257L767 249L759 242L751 246L739 250L730 249L725 256L721 265L713 268L706 279L709 285L703 293L694 299L683 299L676 304L672 301L666 296Z"/><path d="M675 306L697 311L725 299L764 295L771 297L770 313L766 319L774 324L783 326L795 330L816 343L822 331L833 326L845 331L878 337L892 336L893 346L899 361L911 384L920 410L927 420L933 434L943 444L954 458L961 465L978 460L1000 456L998 465L992 481L981 498L966 513L947 527L934 547L932 563L939 584L939 607L933 621L918 631L906 639L910 655L910 665L894 677L895 693L885 702L865 725L822 737L813 731L809 720L795 684L791 658L775 624L778 602L784 574L778 558L761 537L762 522L762 509L763 501L757 498L742 500L728 488L715 489L707 493L697 497L685 494L666 499L647 488L633 475L623 462L613 453L609 439L614 431L617 419L615 410L611 402L623 380L634 360L654 342L652 334L665 321L670 318L673 310Z"/><path d="M358 8L344 33L345 59L336 71L321 64L299 55L284 40L264 42L270 25L293 11L296 -4L282 -25L264 -50L355 -50Z"/><path d="M213 46L219 22L230 19L247 38L233 51L222 56Z"/><path d="M459 97L438 87L425 65L415 44L406 16L402 -18L395 -77L594 -77L583 -45L560 -19L526 -14L509 16L492 25L481 36L475 59L466 81Z"/><path d="M572 26L580 14L603 16L620 12L626 29L631 33L623 42L602 54L589 49L579 47L581 38L572 34Z"/><path d="M225 396L239 389L253 388L269 397L278 401L286 407L267 408L262 399L245 395L233 396Z"/><path d="M285 417L294 408L310 410L319 416L304 422L286 419Z"/><path d="M263 417L274 419L270 422Z"/><path d="M326 417L335 417L334 420L326 420Z"/><path d="M371 215L390 195L392 180L404 201L408 216L404 224L391 220L376 218Z"/><path d="M-22 187L-3 192L7 209L-6 204Z"/><path d="M1516 229L1525 224L1522 199L1531 203L1522 176L1519 155L1516 167L1517 203L1515 220Z"/><path d="M1505 264L1511 262L1523 260L1537 250L1527 244L1515 233L1513 250L1506 251Z"/><path d="M1453 318L1461 316L1476 314L1477 321L1486 316L1496 314L1504 311L1510 306L1510 297L1513 288L1516 278L1513 265L1506 266L1504 275L1505 283L1502 289L1496 294L1489 299L1486 295L1482 306L1468 308L1456 314Z"/><path d="M1447 324L1453 319L1459 325L1455 336L1449 337L1445 328Z"/><path d="M1461 323L1469 323L1474 318L1472 316L1463 319Z"/><path d="M1392 389L1397 396L1402 378L1399 375L1395 380Z"/><path d="M1326 413L1337 419L1340 409L1335 407Z"/><path d="M1391 432L1394 417L1403 417L1402 429L1400 442L1414 449L1410 445L1394 445L1390 433Z"/><path d="M1402 484L1414 481L1422 468L1428 481L1422 492L1414 488Z"/><path d="M1402 461L1414 455L1422 461L1411 470L1405 468Z"/><path d="M1328 515L1332 530L1335 541L1360 546L1370 544L1370 533L1377 524L1378 518L1385 518L1378 501L1386 494L1374 484L1371 487L1362 497L1354 501L1343 508L1332 513Z"/><path d="M1250 492L1263 494L1279 513L1299 530L1311 541L1311 558L1303 558L1290 547L1277 530L1269 514L1254 504Z"/><path d="M1307 563L1312 558L1323 560L1336 563L1349 563L1360 569L1359 574L1334 571L1314 566Z"/><path d="M1362 572L1385 571L1408 571L1408 574L1385 574L1364 574Z"/><path d="M1414 581L1432 572L1422 578Z"/><path d="M1387 555L1393 556L1393 540L1399 551L1408 550L1398 534L1410 529L1394 527L1399 521L1419 515L1415 522L1391 519L1389 526L1384 539Z"/><path d="M1434 514L1439 515L1436 524L1432 527Z"/><path d="M1436 541L1452 542L1448 546L1438 544Z"/><path d="M1453 531L1472 529L1478 543L1493 533L1510 539L1538 552L1547 559L1539 570L1525 575L1516 577L1510 576L1499 570L1493 572L1491 555L1472 546L1461 540L1463 547Z"/><path d="M1354 652L1357 651L1373 644L1397 637L1403 625L1411 619L1419 609L1430 603L1438 610L1445 610L1448 599L1453 594L1463 589L1485 592L1481 602L1479 610L1490 617L1501 625L1509 625L1513 610L1514 596L1519 585L1525 598L1535 610L1540 634L1556 646L1579 671L1581 693L1581 716L1362 726L1354 677Z"/><path d="M1162 478L1164 468L1174 482L1170 489L1163 489Z"/><path d="M959 671L976 670L990 622L994 613L989 593L981 602L970 616L959 623L955 651Z"/><path d="M676 194L688 191L716 184L718 170L710 163L707 157L699 142L696 133L698 121L689 110L680 110L673 122L676 135L680 146L691 149L688 158L692 164L681 169L679 179L691 182Z"/><path d="M674 175L674 159L677 152L668 145L661 146L651 156L652 164L649 176L654 180L663 178Z"/><path d="M779 289L797 288L794 299L779 293Z"/><path d="M755 268L764 267L763 282L756 283L754 272Z"/><path d="M757 257L762 253L762 260L761 265L758 261Z"/><path d="M842 307L858 309L856 311L842 310Z"/><path d="M892 313L905 306L901 311L895 314Z"/><path d="M770 141L780 138L779 146L772 146Z"/><path d="M764 143L770 143L768 148L765 147Z"/></g>
<g fill="#d4e6ea" stroke="#c3dbe0" stroke-width="1.5"><path d="M867 266L873 266L887 266L902 260L913 263L924 269L945 263L945 256L936 249L924 242L920 235L916 234L907 237L898 241L893 233L899 229L888 224L883 224L877 235L871 242L867 253L867 260Z"/><path d="M907 234L916 233L926 223L931 219L919 221L910 226Z"/><path d="M860 272L874 269L876 272L865 273Z"/><path d="M976 237L987 224L1001 220L1011 224L1010 234L1000 240L1009 260L1015 269L1010 281L1015 295L1001 299L992 294L987 287L990 273L984 262L977 253Z"/><path d="M184 223L199 212L213 207L226 220L227 224L213 225L193 224Z"/><path d="M209 263L216 258L218 239L222 231L226 230L210 231L208 249Z"/><path d="M227 229L239 229L252 235L245 242L239 253L233 245L229 237Z"/><path d="M234 263L247 258L258 254L250 257L239 264Z"/><path d="M254 250L267 245L275 244L274 249L259 251Z"/><path d="M145 190L156 190L159 172L151 158L145 165Z"/><path d="M43 81L60 81L77 63L60 66L48 71Z"/><path d="M-3 33L20 36L37 19L26 5L3 12Z"/><path d="M1300 180L1308 178L1323 162L1333 141L1328 143L1314 167L1303 176Z"/><path d="M879 92L895 87L893 80L882 80Z"/><path d="M889 530L902 527L902 538L893 540L889 534Z"/><path d="M1129 226L1146 224L1158 223L1152 226L1135 229Z"/></g>
</svg>
<div class="ml" style="left:80px;top:182px;width:160px">NORTH<br>AMERICA</div>
<div class="ml" style="left:173.5px;top:457px;width:160px">AMÉRICA</div>
<div class="ml" style="left:211.5px;top:598px;width:300px">AMÉRICA<br>DO SUL;AMÉRICA<br>DEL SUR</div>
<div class="ml" style="left:710px;top:428px;width:200px">AFRIKA /</div>
<div class="ml" style="left:1401px;top:656px;width:140px;text-align:left">AUSTRA</div>
<svg style="position:absolute;left:1186px;top:170px;width:60px;height:32px;overflow:visible" viewBox="0 0 60 32" fill="none" stroke-linecap="butt">
<g id="cjk"><path d="M3 5.7H26M11.4 5.8V25.3M17.2 5.8V25.3M3.9 11.4L8.7 21.7M24.3 11.2L20.8 21.5M3.1 25.5H26.7M34.7 4.5L38 7.4M32.5 10.2L36.4 13.8M32.9 27.1L36.8 18.1M43.2 3.5V20.5Q43.2 24 38 27.3M48.3 4.3V26.5M53.9 3.5V27.7M40 11.4L38.2 16.2M44.4 11.4L45.6 15.4M49 10.2L51.5 16.2"/></g>
<use href="#cjk" stroke="#fff" stroke-width="5" stroke-opacity=".8"/><use href="#cjk" stroke="#34557a" stroke-width="1.9"/></svg>
<svg style="position:absolute;left:756px;top:456px;width:106px;height:40px;overflow:visible" viewBox="0 0 106 40">
<g id="arb"><path d="M3.4 9.9h4.5v16.4h12v-3.3h4v3.3h4.5a6.5 6.5 0 1 1 12.6 0h8.6v-3.3h4v7.5h-50.2z M97.9 9.9h4.7v20.6h-4.7z M98.3 3h4v1.5h-2.5v1h2.5v1.5h-4z M70.8 26.3h8a6.5 6.5 0 1 1 12.9 0v4.2h-20.9z M66.4 22.8h4.5c1 8-3 13.5-14.4 13.9v-3.5c7-.5 10.5-3.5 9.9-10.4z M32.5 12.9h2v2h-2zM36 12.9h2v2h-2zM84.2 12.9h2v2h-2zM15.8 34h2v2h-2zM19.3 34h2v2h-2zM57.5 34h2v2h-2zM61 34h2v2h-2z"/></g>
<use href="#arb" fill="none" stroke="#fff" stroke-width="3" stroke-opacity=".8"/><use href="#arb" fill="#3e5a7c"/>
<circle cx="34.8" cy="22" r="2" fill="#faf7f3"/><circle cx="85" cy="21.5" r="2" fill="#faf7f3"/></svg>
<div class="ml" style="left:705px;top:220px;width:120px">EUROPE</div>
<svg width="1512" height="700" viewBox="0 0 1512 700" style="position:absolute;left:0;top:0">
<g fill="none" stroke="#5aaae6" stroke-opacity="0.3" stroke-width="2.3"><path d="M757.0 195.0L754.0 191.2L751.0 187.4L747.9 183.6L744.8 179.8L741.6 175.9L738.4 172.1L735.0 168.2L731.7 164.4L728.2 160.5L724.7 156.6L721.1 152.7L717.5 148.8L713.8 144.9L710.0 141.0L706.1 137.1L702.2 133.2L698.1 129.3L694.0 125.4L689.8 121.5L685.6 117.6L681.2 113.7L676.7 109.9L672.2 106.0L667.6 102.2L662.8 98.4L658.0 94.6L653.1 90.8L648.1 87.1L642.9 83.4L637.7 79.7L632.4 76.1L626.9 72.5L621.4 68.9L615.7 65.4L610.0 62.0L604.1 58.6L598.1 55.3L592.1 52.1L585.9 48.9L579.6 45.8"/><path d="M757.0 195.0L756.6 192.7L756.3 190.4L755.9 188.1L755.5 185.8L755.1 183.4L754.7 181.1L754.3 178.7L753.9 176.3L753.5 173.9L753.1 171.5L752.7 169.1L752.3 166.7L751.9 164.2L751.5 161.8L751.0 159.3L750.6 156.8L750.2 154.3L749.7 151.8L749.3 149.2L748.8 146.7L748.3 144.1L747.9 141.5L747.4 138.9L746.9 136.3L746.4 133.7L745.9 131.0L745.4 128.4L744.9 125.7L744.4 123.0L743.9 120.2L743.3 117.5L742.8 114.7L742.2 112.0L741.7 109.2L741.1 106.3L740.6 103.5L740.0 100.6L739.4 97.7L738.8 94.8L738.2 91.9"/><path d="M757.0 195.0L756.6 193.0L756.3 191.0L755.9 189.0L755.5 187.0L755.2 185.0L754.8 183.0L754.4 181.0L754.0 178.9L753.7 176.9L753.3 174.8L752.9 172.7L752.5 170.7L752.1 168.6L751.7 166.5L751.2 164.3L750.8 162.2L750.4 160.1L750.0 157.9L749.6 155.8L749.1 153.6L748.7 151.4L748.2 149.2L747.8 147.0L747.3 144.8L746.9 142.6L746.4 140.4L746.0 138.1L745.5 135.8L745.0 133.6L744.5 131.3L744.0 129.0L743.5 126.7L743.0 124.3L742.5 122.0L742.0 119.6L741.5 117.3L741.0 114.9L740.4 112.5L739.9 110.1L739.3 107.7"/><path d="M757.0 195.0L757.3 192.7L757.6 190.4L757.9 188.1L758.2 185.8L758.5 183.4L758.8 181.1L759.1 178.7L759.4 176.4L759.7 174.0L760.0 171.6L760.3 169.1L760.7 166.7L761.0 164.3L761.3 161.8L761.7 159.3L762.0 156.8L762.4 154.3L762.7 151.8L763.1 149.3L763.4 146.7L763.8 144.2L764.2 141.6L764.5 139.0L764.9 136.4L765.3 133.7L765.7 131.1L766.1 128.4L766.5 125.7L766.9 123.0L767.3 120.3L767.7 117.5L768.1 114.8L768.6 112.0L769.0 109.2L769.4 106.4L769.9 103.5L770.3 100.6L770.8 97.8L771.3 94.8L771.8 91.9"/><path d="M757.0 195.0L758.0 192.8L759.1 190.5L760.2 188.2L761.2 186.0L762.3 183.7L763.4 181.4L764.5 179.1L765.7 176.8L766.8 174.5L768.0 172.1L769.1 169.8L770.3 167.4L771.5 165.1L772.7 162.7L773.9 160.3L775.1 157.9L776.4 155.5L777.7 153.1L778.9 150.7L780.2 148.2L781.5 145.8L782.9 143.3L784.2 140.9L785.6 138.4L787.0 135.9L788.4 133.4L789.8 130.9L791.2 128.4L792.6 125.8L794.1 123.3L795.6 120.7L797.1 118.2L798.6 115.6L800.2 113.0L801.8 110.4L803.4 107.8L805.0 105.2L806.6 102.5L808.3 99.9L810.0 97.2"/><path d="M757.0 195.0L758.8 192.5L760.6 190.0L762.4 187.5L764.3 184.9L766.2 182.4L768.1 179.9L770.0 177.3L772.0 174.8L773.9 172.2L775.9 169.7L778.0 167.1L780.0 164.5L782.1 161.9L784.2 159.3L786.3 156.7L788.5 154.1L790.7 151.5L792.9 148.9L795.1 146.3L797.4 143.7L799.7 141.1L802.0 138.5L804.4 135.8L806.8 133.2L809.2 130.6L811.7 127.9L814.2 125.3L816.7 122.6L819.3 120.0L821.9 117.4L824.5 114.7L827.2 112.1L829.9 109.4L832.7 106.8L835.5 104.1L838.3 101.5L841.2 98.9L844.1 96.2L847.0 93.6L850.0 91.0"/><path d="M757.0 195.0L758.8 192.7L760.7 190.4L762.6 188.1L764.4 185.8L766.4 183.5L768.3 181.2L770.2 178.9L772.2 176.6L774.2 174.3L776.2 172.0L778.3 169.7L780.4 167.4L782.5 165.0L784.6 162.7L786.7 160.4L788.9 158.0L791.1 155.7L793.3 153.4L795.5 151.0L797.8 148.7L800.1 146.4L802.4 144.0L804.8 141.7L807.1 139.4L809.5 137.0L812.0 134.7L814.4 132.4L816.9 130.0L819.5 127.7L822.0 125.4L824.6 123.0L827.2 120.7L829.9 118.4L832.5 116.1L835.3 113.8L838.0 111.5L840.8 109.2L843.6 106.9L846.4 104.6L849.3 102.3"/><path d="M757.0 195.0L759.4 192.5L761.8 189.9L764.2 187.4L766.7 184.9L769.2 182.4L771.7 179.8L774.3 177.3L776.9 174.8L779.5 172.2L782.2 169.7L784.9 167.2L787.6 164.7L790.4 162.2L793.2 159.6L796.0 157.1L798.9 154.6L801.8 152.1L804.7 149.6L807.7 147.1L810.7 144.6L813.7 142.2L816.8 139.7L819.9 137.2L823.1 134.8L826.3 132.4L829.6 129.9L832.8 127.5L836.2 125.1L839.5 122.7L843.0 120.4L846.4 118.0L849.9 115.7L853.4 113.3L857.0 111.0L860.6 108.8L864.3 106.5L868.0 104.3L871.8 102.1L875.6 99.9L879.4 97.7"/><path d="M757.0 195.0L757.4 193.3L757.9 191.5L758.3 189.8L758.7 188.0L759.2 186.3L759.6 184.5L760.1 182.7L760.5 180.9L761.0 179.1L761.5 177.4L761.9 175.5L762.4 173.7L762.9 171.9L763.3 170.1L763.8 168.3L764.3 166.4L764.8 164.6L765.3 162.7L765.8 160.8L766.3 159.0L766.8 157.1L767.3 155.2L767.9 153.3L768.4 151.4L768.9 149.5L769.5 147.6L770.0 145.6L770.5 143.7L771.1 141.7L771.6 139.8L772.2 137.8L772.8 135.8L773.4 133.9L773.9 131.9L774.5 129.9L775.1 127.9L775.7 125.8L776.3 123.8L776.9 121.8L777.5 119.7"/><path d="M757.0 195.0L758.8 193.2L760.7 191.5L762.5 189.7L764.4 188.0L766.3 186.2L768.2 184.5L770.1 182.8L772.1 181.0L774.0 179.3L776.0 177.5L778.0 175.8L780.0 174.1L782.0 172.3L784.0 170.6L786.1 168.9L788.2 167.1L790.3 165.4L792.4 163.7L794.5 162.0L796.6 160.3L798.8 158.6L801.0 156.9L803.2 155.2L805.4 153.5L807.6 151.8L809.9 150.1L812.2 148.4L814.5 146.8L816.8 145.1L819.1 143.5L821.5 141.8L823.8 140.2L826.2 138.5L828.6 136.9L831.1 135.3L833.5 133.7L836.0 132.1L838.5 130.5L841.0 128.9L843.5 127.3"/><path d="M757.0 195.0L755.7 193.3L754.4 191.6L753.1 189.9L751.7 188.2L750.4 186.5L749.0 184.8L747.7 183.1L746.3 181.3L744.9 179.6L743.5 177.9L742.1 176.2L740.7 174.5L739.2 172.7L737.8 171.0L736.3 169.3L734.8 167.5L733.4 165.8L731.9 164.1L730.3 162.3L728.8 160.6L727.3 158.8L725.7 157.1L724.2 155.3L722.6 153.6L721.0 151.8L719.4 150.1L717.8 148.3L716.1 146.6L714.5 144.8L712.8 143.1L711.1 141.3L709.5 139.6L707.7 137.8L706.0 136.0L704.3 134.3L702.5 132.5L700.8 130.8L699.0 129.0L697.2 127.2L695.3 125.5"/><path d="M757.0 195.0L755.4 193.5L753.7 192.1L752.0 190.6L750.3 189.2L748.7 187.7L747.0 186.3L745.2 184.8L743.5 183.4L741.8 181.9L740.0 180.5L738.3 179.0L736.5 177.6L734.7 176.1L732.9 174.7L731.1 173.3L729.3 171.9L727.4 170.4L725.6 169.0L723.7 167.6L721.8 166.2L719.9 164.8L718.0 163.4L716.1 162.0L714.2 160.6L712.2 159.2L710.3 157.8L708.3 156.4L706.3 155.0L704.3 153.6L702.3 152.3L700.3 150.9L698.3 149.6L696.2 148.2L694.1 146.9L692.1 145.5L690.0 144.2L687.9 142.9L685.7 141.5L683.6 140.2L681.5 138.9"/><path d="M757.0 195.0L755.5 193.5L754.0 192.1L752.5 190.6L751.0 189.2L749.4 187.7L747.9 186.2L746.3 184.8L744.8 183.3L743.2 181.9L741.6 180.4L740.0 179.0L738.4 177.5L736.8 176.1L735.1 174.6L733.5 173.2L731.8 171.7L730.2 170.3L728.5 168.8L726.8 167.4L725.1 165.9L723.4 164.5L721.7 163.1L719.9 161.6L718.2 160.2L716.4 158.8L714.6 157.4L712.8 155.9L711.0 154.5L709.2 153.1L707.4 151.7L705.6 150.3L703.7 148.9L701.8 147.5L700.0 146.1L698.1 144.7L696.2 143.3L694.2 141.9L692.3 140.5L690.4 139.1L688.4 137.8"/><path d="M757.0 195.0L755.1 193.8L753.2 192.6L751.2 191.3L749.3 190.1L747.3 188.9L745.4 187.7L743.4 186.6L741.4 185.4L739.4 184.2L737.4 183.0L735.3 181.9L733.3 180.7L731.3 179.5L729.2 178.4L727.1 177.3L725.1 176.1L723.0 175.0L720.9 173.9L718.7 172.8L716.6 171.7L714.5 170.6L712.3 169.5L710.2 168.4L708.0 167.4L705.8 166.3L703.6 165.3L701.4 164.2L699.2 163.2L697.0 162.2L694.7 161.2L692.5 160.2L690.2 159.2L687.9 158.2L685.7 157.2L683.4 156.3L681.1 155.3L678.7 154.4L676.4 153.5L674.1 152.6L671.7 151.7"/><path d="M757.0 195.0L755.0 194.1L753.1 193.1L751.1 192.2L749.1 191.3L747.1 190.4L745.1 189.5L743.1 188.6L741.1 187.7L739.0 186.9L737.0 186.0L735.0 185.1L732.9 184.3L730.8 183.4L728.8 182.6L726.7 181.8L724.6 181.0L722.5 180.2L720.4 179.4L718.3 178.6L716.2 177.8L714.0 177.0L711.9 176.3L709.8 175.5L707.6 174.8L705.4 174.1L703.3 173.3L701.1 172.6L698.9 171.9L696.7 171.2L694.5 170.6L692.3 169.9L690.1 169.2L687.9 168.6L685.7 168.0L683.4 167.3L681.2 166.7L679.0 166.1L676.7 165.5L674.5 165.0L672.2 164.4"/><path d="M757.0 195.0L754.7 194.1L752.4 193.3L750.0 192.4L747.7 191.6L745.3 190.7L742.9 189.9L740.6 189.1L738.2 188.3L735.8 187.6L733.4 186.8L731.0 186.0L728.6 185.3L726.1 184.6L723.7 183.8L721.2 183.1L718.8 182.4L716.3 181.8L713.9 181.1L711.4 180.5L708.9 179.8L706.4 179.2L703.9 178.6L701.4 178.0L698.9 177.4L696.4 176.8L693.8 176.3L691.3 175.8L688.8 175.2L686.2 174.7L683.7 174.2L681.1 173.8L678.5 173.3L676.0 172.9L673.4 172.4L670.8 172.0L668.2 171.6L665.6 171.2L663.0 170.9L660.4 170.5L657.8 170.2"/><path d="M757.0 195.0L755.6 194.1L754.1 193.2L752.7 192.3L751.3 191.4L749.8 190.6L748.4 189.7L746.9 188.8L745.5 187.9L744.0 187.1L742.5 186.2L741.0 185.3L739.5 184.5L738.0 183.6L736.5 182.8L735.0 181.9L733.5 181.1L732.0 180.2L730.5 179.4L728.9 178.5L727.4 177.7L725.9 176.9L724.3 176.1L722.7 175.3L721.2 174.4L719.6 173.6L718.0 172.8L716.5 172.0L714.9 171.2L713.3 170.4L711.7 169.7L710.1 168.9L708.5 168.1L706.8 167.3L705.2 166.6L703.6 165.8L702.0 165.0L700.3 164.3L698.7 163.5L697.0 162.8L695.3 162.1"/><path d="M757.0 195.0L755.6 194.3L754.2 193.7L752.8 193.0L751.3 192.3L749.9 191.7L748.5 191.0L747.0 190.4L745.6 189.7L744.1 189.1L742.7 188.4L741.2 187.8L739.8 187.2L738.3 186.5L736.8 185.9L735.4 185.3L733.9 184.7L732.4 184.1L730.9 183.5L729.4 182.9L727.9 182.3L726.4 181.7L724.9 181.1L723.4 180.5L721.9 179.9L720.4 179.3L718.9 178.8L717.4 178.2L715.8 177.7L714.3 177.1L712.8 176.6L711.2 176.0L709.7 175.5L708.1 174.9L706.6 174.4L705.0 173.9L703.5 173.4L701.9 172.8L700.3 172.3L698.8 171.8L697.2 171.3"/><path d="M757.0 195.0L755.8 194.6L754.5 194.3L753.3 193.9L752.0 193.5L750.8 193.2L749.5 192.8L748.3 192.5L747.0 192.1L745.7 191.8L744.5 191.4L743.2 191.1L741.9 190.8L740.7 190.4L739.4 190.1L738.1 189.8L736.9 189.5L735.6 189.1L734.3 188.8L733.0 188.5L731.7 188.2L730.5 187.9L729.2 187.6L727.9 187.3L726.6 187.0L725.3 186.7L724.0 186.5L722.7 186.2L721.4 185.9L720.1 185.6L718.8 185.4L717.5 185.1L716.2 184.8L714.9 184.6L713.6 184.3L712.3 184.1L711.0 183.8L709.7 183.6L708.4 183.4L707.1 183.1L705.8 182.9"/><path d="M757.0 195.0L757.1 193.7L757.1 192.4L757.2 191.1L757.2 189.8L757.3 188.5L757.4 187.2L757.4 185.8L757.5 184.5L757.5 183.2L757.6 181.8L757.7 180.5L757.7 179.2L757.8 177.8L757.9 176.5L757.9 175.1L758.0 173.7L758.1 172.4L758.1 171.0L758.2 169.6L758.3 168.2L758.3 166.9L758.4 165.5L758.5 164.1L758.5 162.7L758.6 161.3L758.7 159.9L758.7 158.5L758.8 157.0L758.9 155.6L759.0 154.2L759.0 152.8L759.1 151.3L759.2 149.9L759.3 148.4L759.3 147.0L759.4 145.5L759.5 144.0L759.6 142.6L759.6 141.1L759.7 139.6"/><path d="M757.0 195.0L757.5 193.7L758.0 192.4L758.5 191.1L759.0 189.8L759.5 188.5L760.0 187.2L760.5 185.9L761.0 184.6L761.5 183.3L762.0 182.0L762.5 180.7L763.0 179.4L763.6 178.0L764.1 176.7L764.6 175.4L765.2 174.0L765.7 172.7L766.3 171.3L766.8 170.0L767.3 168.6L767.9 167.3L768.5 165.9L769.0 164.6L769.6 163.2L770.1 161.8L770.7 160.4L771.3 159.1L771.9 157.7L772.5 156.3L773.0 154.9L773.6 153.5L774.2 152.1L774.8 150.7L775.4 149.3L776.0 147.9L776.7 146.5L777.3 145.1L777.9 143.6L778.5 142.2L779.2 140.8"/><path d="M757.0 195.0L757.6 194.0L758.1 193.0L758.7 192.0L759.2 191.0L759.8 189.9L760.4 188.9L760.9 187.9L761.5 186.9L762.1 185.9L762.7 184.8L763.2 183.8L763.8 182.8L764.4 181.7L765.0 180.7L765.6 179.7L766.2 178.6L766.8 177.6L767.4 176.6L768.0 175.5L768.6 174.5L769.2 173.4L769.8 172.4L770.5 171.3L771.1 170.3L771.7 169.2L772.3 168.2L773.0 167.1L773.6 166.1L774.2 165.0L774.9 164.0L775.5 162.9L776.2 161.8L776.8 160.8L777.5 159.7L778.1 158.6L778.8 157.6L779.5 156.5L780.1 155.4L780.8 154.4L781.5 153.3"/><path d="M757.0 195.0L758.3 193.9L759.6 192.9L760.8 191.8L762.1 190.7L763.4 189.6L764.8 188.6L766.1 187.5L767.4 186.4L768.7 185.4L770.1 184.3L771.4 183.3L772.7 182.2L774.1 181.2L775.5 180.1L776.8 179.0L778.2 178.0L779.6 176.9L781.0 175.9L782.4 174.9L783.8 173.8L785.2 172.8L786.6 171.7L788.1 170.7L789.5 169.7L790.9 168.6L792.4 167.6L793.8 166.6L795.3 165.6L796.8 164.5L798.2 163.5L799.7 162.5L801.2 161.5L802.7 160.5L804.2 159.5L805.7 158.5L807.3 157.5L808.8 156.5L810.3 155.5L811.9 154.5L813.4 153.5"/><path d="M757.0 195.0L759.1 193.7L761.3 192.5L763.4 191.2L765.6 190.0L767.7 188.7L769.9 187.5L772.1 186.3L774.3 185.1L776.5 183.9L778.8 182.7L781.0 181.5L783.3 180.3L785.5 179.1L787.8 177.9L790.1 176.8L792.4 175.6L794.8 174.5L797.1 173.4L799.4 172.3L801.8 171.2L804.2 170.1L806.6 169.0L809.0 167.9L811.4 166.9L813.8 165.8L816.2 164.8L818.7 163.8L821.2 162.8L823.6 161.8L826.1 160.8L828.6 159.8L831.1 158.8L833.7 157.9L836.2 157.0L838.7 156.0L841.3 155.1L843.9 154.2L846.4 153.4L849.0 152.5L851.6 151.7"/><path d="M757.0 195.0L760.5 193.1L764.0 191.1L767.6 189.2L771.2 187.4L774.8 185.5L778.5 183.7L782.2 181.9L785.9 180.1L789.7 178.3L793.5 176.6L797.3 174.9L801.1 173.2L805.0 171.6L808.9 170.0L812.9 168.4L816.9 166.9L820.9 165.3L824.9 163.9L829.0 162.4L833.1 161.0L837.2 159.6L841.3 158.3L845.5 157.0L849.7 155.8L853.9 154.5L858.2 153.4L862.5 152.2L866.8 151.1L871.1 150.1L875.4 149.1L879.8 148.1L884.2 147.2L888.6 146.4L893.0 145.6L897.5 144.8L901.9 144.1L906.4 143.4L910.9 142.8L915.4 142.2L919.9 141.7"/><path d="M757.0 195.0L760.6 193.1L764.3 191.1L767.9 189.2L771.6 187.4L775.4 185.5L779.2 183.7L783.0 181.9L786.8 180.1L790.7 178.4L794.6 176.7L798.6 175.0L802.5 173.4L806.5 171.7L810.6 170.2L814.6 168.6L818.7 167.1L822.9 165.6L827.0 164.2L831.2 162.8L835.4 161.4L839.7 160.1L843.9 158.8L848.2 157.6L852.5 156.4L856.9 155.2L861.3 154.1L865.7 153.0L870.1 152.0L874.5 151.0L879.0 150.1L883.5 149.2L888.0 148.4L892.5 147.6L897.0 146.9L901.6 146.2L906.2 145.5L910.7 145.0L915.3 144.4L919.9 144.0L924.6 143.6"/><path d="M757.0 195.0L761.8 192.4L766.7 189.8L771.7 187.2L776.7 184.7L781.7 182.3L786.9 179.9L792.1 177.5L797.3 175.2L802.6 173.0L808.0 170.8L813.4 168.6L818.9 166.6L824.4 164.6L830.0 162.6L835.6 160.7L841.3 158.9L847.1 157.2L852.8 155.6L858.7 154.0L864.6 152.5L870.5 151.1L876.4 149.7L882.4 148.5L888.5 147.3L894.5 146.3L900.6 145.3L906.8 144.4L912.9 143.6L919.1 142.9L925.3 142.3L931.5 141.8L937.8 141.4L944.0 141.1L950.3 140.9L956.5 140.8L962.8 140.8L969.0 140.8L975.3 141.0L981.5 141.3L987.8 141.7"/><path d="M757.0 195.0L762.2 191.5L767.5 188.0L772.8 184.5L778.3 181.1L783.8 177.8L789.4 174.5L795.1 171.2L801.0 168.0L806.9 164.9L812.8 161.8L818.9 158.8L825.1 155.8L831.4 152.9L837.7 150.1L844.2 147.4L850.7 144.8L857.3 142.3L864.0 139.9L870.8 137.5L877.6 135.3L884.5 133.2L891.5 131.2L898.6 129.3L905.8 127.5L913.0 125.9L920.2 124.4L927.6 123.0L934.9 121.8L942.3 120.7L949.8 119.7L957.3 118.9L964.8 118.2L972.3 117.7L979.9 117.3L987.5 117.0L995.0 116.9L1002.6 117.0L1010.2 117.2L1017.7 117.6L1025.3 118.1"/><path d="M757.0 195.0L758.7 194.3L760.3 193.7L762.0 193.0L763.7 192.4L765.4 191.7L767.1 191.1L768.8 190.4L770.5 189.8L772.2 189.2L773.9 188.6L775.6 188.0L777.3 187.4L779.0 186.8L780.8 186.2L782.5 185.6L784.2 185.0L786.0 184.4L787.7 183.9L789.5 183.3L791.2 182.8L793.0 182.2L794.8 181.7L796.5 181.1L798.3 180.6L800.1 180.1L801.9 179.6L803.7 179.1L805.5 178.6L807.3 178.1L809.1 177.6L810.9 177.1L812.7 176.7L814.5 176.2L816.3 175.7L818.1 175.3L820.0 174.9L821.8 174.4L823.6 174.0L825.5 173.6L827.3 173.2"/><path d="M757.0 195.0L760.1 194.5L763.2 193.9L766.3 193.4L769.3 192.9L772.5 192.5L775.6 192.0L778.7 191.6L781.8 191.2L784.9 190.8L788.1 190.5L791.2 190.2L794.4 189.9L797.5 189.6L800.7 189.3L803.8 189.1L807.0 188.9L810.1 188.7L813.3 188.5L816.5 188.4L819.6 188.3L822.8 188.2L826.0 188.1L829.2 188.1L832.3 188.1L835.5 188.1L838.7 188.1L841.9 188.2L845.0 188.2L848.2 188.3L851.4 188.5L854.5 188.6L857.7 188.8L860.9 189.0L864.0 189.2L867.2 189.5L870.3 189.7L873.5 190.0L876.6 190.3L879.8 190.7L882.9 191.0"/><path d="M757.0 195.0L756.5 194.5L756.0 193.9L755.5 193.4L755.0 192.9L754.5 192.3L754.0 191.8L753.5 191.3L752.9 190.7L752.4 190.2L751.9 189.7L751.4 189.1L750.9 188.6L750.4 188.1L749.8 187.5L749.3 187.0L748.8 186.5L748.3 185.9L747.8 185.4L747.2 184.9L746.7 184.3L746.2 183.8L745.6 183.3L745.1 182.7L744.6 182.2L744.0 181.7L743.5 181.1L743.0 180.6L742.4 180.1L741.9 179.5L741.4 179.0L740.8 178.5L740.3 177.9L739.7 177.4L739.2 176.9L738.6 176.3L738.1 175.8L737.5 175.3L737.0 174.7L736.4 174.2L735.9 173.7"/><path d="M757.0 195.0L756.9 194.5L756.7 194.1L756.6 193.6L756.4 193.1L756.3 192.7L756.1 192.2L756.0 191.7L755.8 191.3L755.7 190.8L755.5 190.3L755.4 189.8L755.2 189.4L755.1 188.9L754.9 188.4L754.8 188.0L754.6 187.5L754.5 187.0L754.3 186.5L754.2 186.1L754.0 185.6L753.9 185.1L753.7 184.6L753.6 184.2L753.4 183.7L753.3 183.2L753.1 182.7L753.0 182.2L752.8 181.8L752.6 181.3L752.5 180.8L752.3 180.3L752.2 179.8L752.0 179.4L751.9 178.9L751.7 178.4L751.5 177.9L751.4 177.4L751.2 176.9L751.1 176.5L750.9 176.0"/><path d="M757.0 195.0L757.2 194.2L757.3 193.3L757.5 192.5L757.6 191.6L757.8 190.7L757.9 189.9L758.1 189.0L758.2 188.2L758.4 187.3L758.6 186.5L758.7 185.6L758.9 184.7L759.0 183.9L759.2 183.0L759.4 182.1L759.5 181.2L759.7 180.4L759.9 179.5L760.0 178.6L760.2 177.7L760.3 176.9L760.5 176.0L760.7 175.1L760.9 174.2L761.0 173.3L761.2 172.4L761.4 171.5L761.5 170.6L761.7 169.7L761.9 168.8L762.1 167.9L762.2 167.0L762.4 166.1L762.6 165.2L762.8 164.3L762.9 163.4L763.1 162.5L763.3 161.6L763.5 160.7L763.6 159.8"/><path d="M757.0 195.0L757.4 194.2L757.8 193.5L758.2 192.7L758.6 191.9L759.0 191.1L759.4 190.3L759.8 189.6L760.2 188.8L760.6 188.0L761.0 187.2L761.4 186.4L761.9 185.7L762.3 184.9L762.7 184.1L763.1 183.3L763.5 182.5L763.9 181.7L764.4 180.9L764.8 180.1L765.2 179.3L765.6 178.5L766.1 177.7L766.5 176.9L766.9 176.1L767.4 175.3L767.8 174.5L768.2 173.7L768.7 172.9L769.1 172.1L769.5 171.3L770.0 170.5L770.4 169.7L770.9 168.9L771.3 168.1L771.8 167.3L772.2 166.5L772.7 165.7L773.1 164.9L773.6 164.0L774.1 163.2"/><path d="M757.0 195.0L757.6 194.4L758.2 193.8L758.9 193.2L759.5 192.6L760.1 192.0L760.8 191.4L761.4 190.8L762.0 190.2L762.7 189.7L763.3 189.1L763.9 188.5L764.6 187.9L765.2 187.3L765.9 186.7L766.5 186.1L767.2 185.5L767.8 184.9L768.5 184.3L769.1 183.7L769.8 183.1L770.4 182.5L771.1 181.9L771.8 181.4L772.4 180.8L773.1 180.2L773.8 179.6L774.4 179.0L775.1 178.4L775.8 177.8L776.5 177.2L777.1 176.6L777.8 176.0L778.5 175.5L779.2 174.9L779.9 174.3L780.6 173.7L781.2 173.1L781.9 172.5L782.6 171.9L783.3 171.3"/><path d="M757.0 195.0L756.4 194.7L755.8 194.5L755.2 194.2L754.6 194.0L754.0 193.7L753.4 193.5L752.8 193.2L752.2 193.0L751.6 192.7L751.0 192.4L750.3 192.2L749.7 191.9L749.1 191.7L748.5 191.4L747.9 191.2L747.3 190.9L746.7 190.7L746.1 190.5L745.5 190.2L744.8 190.0L744.2 189.7L743.6 189.5L743.0 189.2L742.4 189.0L741.8 188.7L741.1 188.5L740.5 188.3L739.9 188.0L739.3 187.8L738.6 187.6L738.0 187.3L737.4 187.1L736.8 186.8L736.2 186.6L735.5 186.4L734.9 186.1L734.3 185.9L733.6 185.7L733.0 185.5L732.4 185.2"/><path d="M757.0 195.0L756.7 194.8L756.5 194.5L756.2 194.3L756.0 194.0L755.7 193.8L755.4 193.5L755.2 193.3L754.9 193.0L754.6 192.8L754.4 192.6L754.1 192.3L753.8 192.1L753.6 191.8L753.3 191.6L753.0 191.3L752.8 191.1L752.5 190.8L752.2 190.6L752.0 190.4L751.7 190.1L751.4 189.9L751.2 189.6L750.9 189.4L750.6 189.1L750.4 188.9L750.1 188.6L749.8 188.4L749.5 188.2L749.3 187.9L749.0 187.7L748.7 187.4L748.5 187.2L748.2 186.9L747.9 186.7L747.6 186.4L747.4 186.2L747.1 186.0L746.8 185.7L746.6 185.5L746.3 185.2"/><path d="M757.0 195.0L757.4 195.0L757.7 195.1L758.1 195.1L758.5 195.2L758.9 195.2L759.2 195.2L759.6 195.3L760.0 195.3L760.3 195.4L760.7 195.4L761.1 195.4L761.4 195.5L761.8 195.5L762.2 195.6L762.5 195.6L762.9 195.7L763.3 195.7L763.7 195.7L764.0 195.8L764.4 195.8L764.8 195.9L765.1 195.9L765.5 196.0L765.9 196.0L766.2 196.1L766.6 196.1L767.0 196.2L767.3 196.2L767.7 196.3L768.1 196.3L768.4 196.4L768.8 196.4L769.2 196.5L769.5 196.5L769.9 196.6L770.3 196.6L770.6 196.7L771.0 196.7L771.4 196.8L771.8 196.8"/><path d="M757.0 195.0L757.5 194.7L757.9 194.4L758.4 194.1L758.9 193.8L759.4 193.5L759.8 193.2L760.3 192.8L760.8 192.5L761.3 192.2L761.7 191.9L762.2 191.6L762.7 191.3L763.2 191.0L763.7 190.7L764.1 190.4L764.6 190.1L765.1 189.8L765.6 189.5L766.1 189.2L766.6 188.9L767.0 188.6L767.5 188.3L768.0 188.0L768.5 187.7L769.0 187.4L769.5 187.1L770.0 186.8L770.5 186.5L770.9 186.2L771.4 185.9L771.9 185.6L772.4 185.3L772.9 185.0L773.4 184.7L773.9 184.4L774.4 184.1L774.9 183.8L775.4 183.5L775.9 183.2L776.4 182.9"/><path d="M757.0 195.0L757.8 194.7L758.5 194.5L759.3 194.2L760.0 193.9L760.8 193.7L761.6 193.4L762.3 193.1L763.1 192.9L763.8 192.6L764.6 192.4L765.4 192.1L766.1 191.9L766.9 191.6L767.7 191.3L768.4 191.1L769.2 190.8L770.0 190.6L770.8 190.4L771.5 190.1L772.3 189.9L773.1 189.6L773.9 189.4L774.6 189.1L775.4 188.9L776.2 188.7L777.0 188.4L777.7 188.2L778.5 187.9L779.3 187.7L780.1 187.5L780.9 187.2L781.7 187.0L782.4 186.8L783.2 186.6L784.0 186.3L784.8 186.1L785.6 185.9L786.4 185.7L787.2 185.4L788.0 185.2"/><path d="M757.0 195.0L757.8 195.0L758.7 194.9L759.5 194.9L760.3 194.8L761.2 194.8L762.0 194.8L762.8 194.7L763.6 194.7L764.5 194.7L765.3 194.6L766.1 194.6L767.0 194.6L767.8 194.5L768.6 194.5L769.5 194.5L770.3 194.5L771.1 194.5L772.0 194.4L772.8 194.4L773.6 194.4L774.5 194.4L775.3 194.4L776.1 194.4L777.0 194.4L777.8 194.4L778.6 194.4L779.5 194.4L780.3 194.4L781.1 194.4L782.0 194.4L782.8 194.4L783.6 194.4L784.4 194.4L785.3 194.4L786.1 194.4L786.9 194.4L787.8 194.4L788.6 194.5L789.4 194.5L790.3 194.5"/><path d="M757.0 195.0L756.1 195.2L755.2 195.3L754.3 195.5L753.4 195.7L752.5 195.9L751.7 196.1L750.8 196.3L749.9 196.4L749.0 196.6L748.1 196.8L747.2 197.0L746.4 197.2L745.5 197.4L744.6 197.6L743.7 197.8L742.8 198.0L741.9 198.2L741.1 198.4L740.2 198.6L739.3 198.8L738.4 199.0L737.6 199.2L736.7 199.4L735.8 199.6L734.9 199.9L734.1 200.1L733.2 200.3L732.3 200.5L731.5 200.7L730.6 201.0L729.7 201.2L728.9 201.4L728.0 201.6L727.1 201.9L726.3 202.1L725.4 202.3L724.5 202.6L723.7 202.8L722.8 203.0L722.0 203.3"/><path d="M757.0 195.0L758.5 194.8L760.1 194.7L761.6 194.6L763.2 194.4L764.7 194.3L766.3 194.2L767.8 194.1L769.4 193.9L770.9 193.8L772.5 193.7L774.0 193.6L775.6 193.5L777.1 193.5L778.7 193.4L780.3 193.3L781.8 193.2L783.4 193.2L784.9 193.1L786.5 193.1L788.0 193.0L789.6 193.0L791.2 193.0L792.7 192.9L794.3 192.9L795.8 192.9L797.4 192.9L799.0 192.9L800.5 192.9L802.1 192.9L803.6 192.9L805.2 192.9L806.8 192.9L808.3 193.0L809.9 193.0L811.4 193.0L813.0 193.1L814.5 193.1L816.1 193.2L817.7 193.3L819.2 193.3"/><path d="M757.0 195.0L758.6 195.4L760.2 195.8L761.8 196.2L763.4 196.7L764.9 197.1L766.5 197.5L768.1 198.0L769.7 198.4L771.2 198.9L772.8 199.3L774.4 199.8L775.9 200.3L777.5 200.7L779.0 201.2L780.6 201.7L782.1 202.2L783.6 202.7L785.2 203.2L786.7 203.7L788.2 204.2L789.8 204.7L791.3 205.2L792.8 205.8L794.3 206.3L795.8 206.8L797.3 207.4L798.9 207.9L800.4 208.4L801.8 209.0L803.3 209.5L804.8 210.1L806.3 210.7L807.8 211.2L809.3 211.8L810.7 212.4L812.2 213.0L813.7 213.6L815.1 214.1L816.6 214.7L818.1 215.3"/><path d="M757.0 195.0L757.1 195.3L757.2 195.6L757.2 195.8L757.3 196.1L757.4 196.4L757.5 196.7L757.6 197.0L757.6 197.2L757.7 197.5L757.8 197.8L757.9 198.1L758.0 198.3L758.0 198.6L758.1 198.9L758.2 199.2L758.3 199.5L758.4 199.7L758.4 200.0L758.5 200.3L758.6 200.6L758.7 200.8L758.8 201.1L758.8 201.4L758.9 201.7L759.0 201.9L759.1 202.2L759.2 202.5L759.2 202.8L759.3 203.0L759.4 203.3L759.5 203.6L759.6 203.9L759.6 204.1L759.7 204.4L759.8 204.7L759.9 205.0L759.9 205.2L760.0 205.5L760.1 205.8L760.2 206.1"/><path d="M757.0 195.0L757.1 195.5L757.2 195.9L757.3 196.4L757.4 196.8L757.6 197.3L757.7 197.7L757.8 198.2L757.9 198.7L758.0 199.1L758.1 199.6L758.2 200.0L758.3 200.5L758.4 200.9L758.6 201.4L758.7 201.8L758.8 202.3L758.9 202.7L759.0 203.2L759.1 203.6L759.2 204.1L759.3 204.5L759.4 205.0L759.5 205.4L759.6 205.9L759.7 206.3L759.9 206.8L760.0 207.2L760.1 207.7L760.2 208.1L760.3 208.6L760.4 209.0L760.5 209.5L760.6 209.9L760.7 210.4L760.8 210.8L760.9 211.2L761.0 211.7L761.1 212.1L761.2 212.6L761.3 213.0"/><path d="M757.0 195.0L757.7 195.4L758.3 195.9L759.0 196.3L759.6 196.8L760.3 197.2L760.9 197.7L761.6 198.1L762.2 198.5L762.8 199.0L763.5 199.4L764.1 199.9L764.8 200.3L765.4 200.8L766.0 201.2L766.7 201.7L767.3 202.1L768.0 202.6L768.6 203.0L769.2 203.5L769.8 203.9L770.5 204.4L771.1 204.8L771.7 205.3L772.4 205.7L773.0 206.2L773.6 206.6L774.2 207.1L774.8 207.5L775.5 208.0L776.1 208.4L776.7 208.9L777.3 209.4L777.9 209.8L778.5 210.3L779.1 210.7L779.7 211.2L780.4 211.6L781.0 212.1L781.6 212.6L782.2 213.0"/><path d="M757.0 195.0L758.2 195.3L759.3 195.6L760.5 195.9L761.6 196.3L762.8 196.6L763.9 196.9L765.1 197.2L766.2 197.6L767.4 197.9L768.5 198.2L769.6 198.6L770.8 198.9L771.9 199.3L773.0 199.6L774.2 200.0L775.3 200.3L776.4 200.7L777.6 201.0L778.7 201.4L779.8 201.7L780.9 202.1L782.0 202.5L783.2 202.9L784.3 203.2L785.4 203.6L786.5 204.0L787.6 204.4L788.7 204.7L789.8 205.1L790.9 205.5L792.0 205.9L793.1 206.3L794.2 206.7L795.3 207.1L796.4 207.5L797.5 207.9L798.6 208.3L799.7 208.7L800.8 209.1L801.9 209.5"/><path d="M757.0 195.0L758.0 195.6L759.1 196.2L760.1 196.8L761.1 197.4L762.1 198.0L763.1 198.6L764.2 199.2L765.2 199.8L766.2 200.4L767.2 201.0L768.2 201.6L769.2 202.3L770.2 202.9L771.2 203.5L772.2 204.1L773.2 204.7L774.2 205.4L775.1 206.0L776.1 206.6L777.1 207.2L778.1 207.8L779.0 208.5L780.0 209.1L781.0 209.7L781.9 210.4L782.9 211.0L783.9 211.6L784.8 212.3L785.8 212.9L786.7 213.5L787.7 214.2L788.6 214.8L789.5 215.4L790.5 216.1L791.4 216.7L792.4 217.4L793.3 218.0L794.2 218.7L795.1 219.3L796.1 220.0"/><path d="M757.0 195.0L756.6 195.8L756.2 196.6L755.8 197.4L755.4 198.1L755.0 198.9L754.6 199.7L754.2 200.5L753.8 201.3L753.4 202.1L753.0 202.8L752.6 203.6L752.2 204.4L751.8 205.2L751.4 205.9L751.0 206.7L750.6 207.5L750.2 208.3L749.8 209.0L749.4 209.8L749.1 210.6L748.7 211.3L748.3 212.1L747.9 212.9L747.5 213.6L747.2 214.4L746.8 215.2L746.4 215.9L746.0 216.7L745.7 217.5L745.3 218.2L744.9 219.0L744.6 219.7L744.2 220.5L743.8 221.2L743.5 222.0L743.1 222.7L742.7 223.5L742.4 224.2L742.0 225.0L741.7 225.7"/><path d="M757.0 195.0L756.4 195.9L755.8 196.7L755.2 197.6L754.6 198.5L754.0 199.4L753.4 200.2L752.8 201.1L752.3 202.0L751.7 202.8L751.1 203.7L750.5 204.6L749.9 205.4L749.4 206.3L748.8 207.2L748.2 208.0L747.7 208.9L747.1 209.7L746.5 210.6L746.0 211.4L745.4 212.3L744.9 213.2L744.3 214.0L743.8 214.9L743.2 215.7L742.7 216.6L742.1 217.4L741.6 218.3L741.0 219.1L740.5 220.0L740.0 220.8L739.4 221.7L738.9 222.5L738.4 223.3L737.8 224.2L737.3 225.0L736.8 225.9L736.3 226.7L735.7 227.5L735.2 228.4L734.7 229.2"/><path d="M757.0 195.0L756.9 196.1L756.7 197.2L756.6 198.2L756.5 199.3L756.3 200.4L756.2 201.4L756.1 202.5L755.9 203.5L755.8 204.6L755.7 205.7L755.6 206.7L755.4 207.8L755.3 208.8L755.2 209.8L755.0 210.9L754.9 211.9L754.8 213.0L754.7 214.0L754.5 215.0L754.4 216.1L754.3 217.1L754.2 218.1L754.1 219.1L753.9 220.1L753.8 221.2L753.7 222.2L753.6 223.2L753.5 224.2L753.3 225.2L753.2 226.2L753.1 227.2L753.0 228.2L752.9 229.2L752.8 230.2L752.6 231.2L752.5 232.2L752.4 233.2L752.3 234.2L752.2 235.2L752.1 236.2"/><path d="M757.0 195.0L757.1 196.0L757.2 197.0L757.3 198.0L757.3 199.0L757.4 200.0L757.5 201.1L757.6 202.1L757.7 203.0L757.8 204.0L757.8 205.0L757.9 206.0L758.0 207.0L758.1 208.0L758.2 209.0L758.3 210.0L758.3 211.0L758.4 211.9L758.5 212.9L758.6 213.9L758.7 214.9L758.7 215.8L758.8 216.8L758.9 217.8L759.0 218.7L759.0 219.7L759.1 220.6L759.2 221.6L759.3 222.5L759.4 223.5L759.4 224.5L759.5 225.4L759.6 226.3L759.7 227.3L759.7 228.2L759.8 229.2L759.9 230.1L760.0 231.1L760.0 232.0L760.1 232.9L760.2 233.9"/><path d="M757.0 195.0L757.6 195.9L758.1 196.9L758.7 197.8L759.2 198.7L759.8 199.7L760.3 200.6L760.8 201.5L761.4 202.5L761.9 203.4L762.5 204.3L763.0 205.3L763.5 206.2L764.1 207.1L764.6 208.0L765.1 208.9L765.6 209.9L766.1 210.8L766.7 211.7L767.2 212.6L767.7 213.5L768.2 214.4L768.7 215.4L769.2 216.3L769.7 217.2L770.2 218.1L770.7 219.0L771.2 219.9L771.7 220.8L772.2 221.7L772.7 222.6L773.2 223.5L773.7 224.4L774.2 225.3L774.7 226.2L775.2 227.1L775.6 228.0L776.1 228.9L776.6 229.8L777.1 230.6L777.5 231.5"/><path d="M757.0 195.0L757.4 196.2L757.8 197.3L758.2 198.5L758.6 199.6L759.0 200.8L759.4 202.0L759.8 203.1L760.2 204.3L760.6 205.4L761.0 206.5L761.4 207.7L761.7 208.8L762.1 210.0L762.5 211.1L762.9 212.2L763.3 213.3L763.6 214.5L764.0 215.6L764.4 216.7L764.7 217.8L765.1 218.9L765.5 220.0L765.8 221.2L766.2 222.3L766.6 223.4L766.9 224.5L767.3 225.6L767.6 226.7L768.0 227.8L768.3 228.8L768.7 229.9L769.0 231.0L769.4 232.1L769.7 233.2L770.1 234.3L770.4 235.3L770.7 236.4L771.1 237.5L771.4 238.6L771.8 239.6"/><path d="M757.0 195.0L758.1 195.8L759.3 196.7L760.4 197.5L761.6 198.3L762.7 199.2L763.8 200.0L764.9 200.9L766.0 201.7L767.2 202.6L768.3 203.4L769.4 204.3L770.5 205.1L771.6 206.0L772.6 206.8L773.7 207.7L774.8 208.5L775.9 209.4L777.0 210.2L778.0 211.1L779.1 211.9L780.2 212.8L781.2 213.6L782.3 214.5L783.3 215.4L784.4 216.2L785.4 217.1L786.4 217.9L787.5 218.8L788.5 219.7L789.5 220.5L790.5 221.4L791.5 222.3L792.6 223.1L793.6 224.0L794.6 224.9L795.6 225.7L796.6 226.6L797.6 227.5L798.6 228.3L799.5 229.2"/><path d="M757.0 195.0L758.1 196.3L759.2 197.5L760.2 198.8L761.3 200.0L762.4 201.3L763.4 202.5L764.5 203.8L765.5 205.0L766.6 206.3L767.6 207.5L768.6 208.7L769.6 210.0L770.7 211.2L771.7 212.5L772.7 213.7L773.7 214.9L774.7 216.2L775.7 217.4L776.6 218.7L777.6 219.9L778.6 221.1L779.5 222.4L780.5 223.6L781.5 224.8L782.4 226.0L783.4 227.3L784.3 228.5L785.2 229.7L786.2 230.9L787.1 232.1L788.0 233.4L788.9 234.6L789.8 235.8L790.7 237.0L791.6 238.2L792.5 239.4L793.4 240.6L794.3 241.9L795.2 243.1L796.1 244.3"/><path d="M757.0 195.0L758.5 196.2L760.1 197.5L761.6 198.7L763.1 200.0L764.6 201.2L766.1 202.5L767.6 203.7L769.1 205.0L770.6 206.2L772.0 207.5L773.5 208.7L774.9 210.0L776.4 211.2L777.8 212.5L779.2 213.8L780.6 215.0L782.0 216.3L783.4 217.5L784.8 218.8L786.2 220.1L787.6 221.3L788.9 222.6L790.3 223.9L791.6 225.1L793.0 226.4L794.3 227.7L795.7 228.9L797.0 230.2L798.3 231.5L799.6 232.7L800.9 234.0L802.2 235.3L803.5 236.5L804.7 237.8L806.0 239.1L807.3 240.4L808.5 241.6L809.8 242.9L811.0 244.2L812.3 245.4"/><path d="M757.0 195.0L758.8 196.0L760.7 197.0L762.5 197.9L764.3 198.9L766.1 199.9L767.9 200.9L769.6 201.9L771.4 202.9L773.2 203.9L774.9 205.0L776.7 206.0L778.4 207.0L780.1 208.1L781.9 209.1L783.6 210.1L785.3 211.2L787.0 212.2L788.7 213.3L790.4 214.3L792.0 215.4L793.7 216.5L795.3 217.5L797.0 218.6L798.6 219.7L800.3 220.8L801.9 221.9L803.5 222.9L805.1 224.0L806.7 225.1L808.3 226.2L809.9 227.3L811.5 228.4L813.1 229.5L814.6 230.6L816.2 231.7L817.7 232.9L819.3 234.0L820.8 235.1L822.3 236.2L823.8 237.3"/><path d="M757.0 195.0L755.5 196.0L754.1 197.0L752.6 198.0L751.2 199.0L749.7 200.0L748.3 201.0L746.9 202.0L745.5 203.0L744.1 204.0L742.7 205.0L741.3 206.0L739.9 207.0L738.5 208.1L737.1 209.1L735.7 210.1L734.4 211.1L733.0 212.2L731.7 213.2L730.3 214.2L729.0 215.3L727.6 216.3L726.3 217.3L725.0 218.4L723.7 219.4L722.4 220.4L721.1 221.5L719.8 222.5L718.5 223.6L717.2 224.6L715.9 225.6L714.6 226.7L713.4 227.7L712.1 228.8L710.9 229.8L709.6 230.9L708.4 231.9L707.1 233.0L705.9 234.1L704.7 235.1L703.4 236.2"/><path d="M757.0 195.0L755.8 196.3L754.7 197.7L753.5 199.0L752.3 200.4L751.2 201.7L750.0 203.0L748.9 204.4L747.8 205.7L746.7 207.1L745.5 208.4L744.4 209.7L743.3 211.1L742.2 212.4L741.2 213.7L740.1 215.0L739.0 216.4L737.9 217.7L736.9 219.0L735.8 220.3L734.8 221.7L733.7 223.0L732.7 224.3L731.7 225.6L730.6 226.9L729.6 228.2L728.6 229.5L727.6 230.9L726.6 232.2L725.6 233.5L724.6 234.8L723.6 236.1L722.7 237.4L721.7 238.7L720.7 240.0L719.8 241.3L718.8 242.6L717.8 243.9L716.9 245.2L716.0 246.5L715.0 247.7"/><path d="M757.0 195.0L755.1 196.3L753.3 197.6L751.5 198.9L749.6 200.2L747.8 201.5L746.0 202.8L744.2 204.1L742.4 205.5L740.7 206.8L738.9 208.1L737.1 209.4L735.4 210.8L733.7 212.1L732.0 213.5L730.2 214.8L728.5 216.1L726.9 217.5L725.2 218.8L723.5 220.2L721.9 221.5L720.2 222.9L718.6 224.2L716.9 225.6L715.3 227.0L713.7 228.3L712.1 229.7L710.5 231.1L709.0 232.4L707.4 233.8L705.8 235.2L704.3 236.5L702.7 237.9L701.2 239.3L699.7 240.6L698.2 242.0L696.7 243.4L695.2 244.8L693.7 246.1L692.2 247.5L690.7 248.9"/><path d="M757.0 195.0L755.3 196.5L753.6 197.9L752.0 199.4L750.3 200.8L748.7 202.3L747.1 203.7L745.5 205.2L743.8 206.7L742.3 208.1L740.7 209.6L739.1 211.0L737.5 212.5L736.0 214.0L734.4 215.4L732.9 216.9L731.4 218.4L729.9 219.8L728.4 221.3L726.9 222.8L725.4 224.2L723.9 225.7L722.5 227.2L721.0 228.6L719.6 230.1L718.1 231.6L716.7 233.0L715.3 234.5L713.9 236.0L712.5 237.4L711.1 238.9L709.7 240.4L708.3 241.8L707.0 243.3L705.6 244.8L704.3 246.2L702.9 247.7L701.6 249.2L700.3 250.6L699.0 252.1L697.7 253.5"/><path d="M757.0 195.0L756.5 196.5L755.9 197.9L755.4 199.3L754.9 200.8L754.4 202.2L753.9 203.7L753.4 205.1L752.8 206.5L752.3 207.9L751.8 209.3L751.3 210.7L750.9 212.2L750.4 213.6L749.9 215.0L749.4 216.4L748.9 217.7L748.4 219.1L748.0 220.5L747.5 221.9L747.0 223.3L746.5 224.6L746.1 226.0L745.6 227.4L745.2 228.7L744.7 230.1L744.3 231.5L743.8 232.8L743.4 234.2L742.9 235.5L742.5 236.8L742.0 238.2L741.6 239.5L741.2 240.8L740.7 242.2L740.3 243.5L739.9 244.8L739.4 246.1L739.0 247.4L738.6 248.8L738.2 250.1"/><path d="M757.0 195.0L756.8 196.4L756.6 197.9L756.4 199.3L756.2 200.7L756.0 202.1L755.8 203.5L755.6 204.9L755.4 206.3L755.2 207.7L755.0 209.1L754.8 210.5L754.6 211.9L754.4 213.2L754.3 214.6L754.1 216.0L753.9 217.3L753.7 218.7L753.5 220.0L753.3 221.4L753.2 222.7L753.0 224.1L752.8 225.4L752.6 226.8L752.4 228.1L752.3 229.4L752.1 230.7L751.9 232.1L751.8 233.4L751.6 234.7L751.4 236.0L751.2 237.3L751.1 238.6L750.9 239.9L750.7 241.2L750.6 242.5L750.4 243.8L750.2 245.1L750.1 246.3L749.9 247.6L749.8 248.9"/><path d="M757.0 195.0L759.7 195.9L762.4 196.8L765.1 197.7L767.8 198.6L770.5 199.5L773.1 200.5L775.8 201.4L778.4 202.4L781.1 203.4L783.7 204.4L786.3 205.4L788.9 206.4L791.4 207.5L794.0 208.5L796.6 209.6L799.1 210.7L801.6 211.8L804.2 212.9L806.7 214.0L809.1 215.1L811.6 216.2L814.1 217.4L816.5 218.5L819.0 219.7L821.4 220.9L823.8 222.1L826.2 223.3L828.6 224.5L831.0 225.7L833.3 226.9L835.7 228.2L838.0 229.4L840.4 230.6L842.7 231.9L845.0 233.2L847.2 234.5L849.5 235.7L851.8 237.0L854.0 238.3L856.3 239.6"/><path d="M757.0 195.0L759.4 196.3L761.8 197.7L764.2 199.0L766.6 200.4L768.9 201.8L771.3 203.1L773.6 204.5L775.9 205.9L778.2 207.3L780.5 208.7L782.7 210.1L785.0 211.6L787.2 213.0L789.4 214.4L791.7 215.9L793.8 217.3L796.0 218.8L798.2 220.3L800.3 221.7L802.5 223.2L804.6 224.7L806.7 226.2L808.8 227.6L810.9 229.1L812.9 230.6L815.0 232.1L817.0 233.6L819.1 235.1L821.1 236.7L823.1 238.2L825.1 239.7L827.0 241.2L829.0 242.8L830.9 244.3L832.9 245.8L834.8 247.4L836.7 248.9L838.6 250.4L840.5 252.0L842.4 253.5"/><path d="M757.0 195.0L759.1 196.5L761.3 198.1L763.4 199.7L765.5 201.2L767.6 202.8L769.7 204.4L771.7 205.9L773.8 207.5L775.8 209.1L777.8 210.7L779.8 212.3L781.8 213.9L783.8 215.5L785.7 217.1L787.6 218.7L789.6 220.3L791.5 221.9L793.4 223.5L795.3 225.1L797.1 226.8L799.0 228.4L800.9 230.0L802.7 231.6L804.5 233.2L806.3 234.9L808.1 236.5L809.9 238.1L811.7 239.7L813.4 241.4L815.2 243.0L816.9 244.6L818.6 246.3L820.3 247.9L822.0 249.5L823.7 251.2L825.4 252.8L827.0 254.4L828.7 256.1L830.3 257.7L831.9 259.3"/><path d="M757.0 195.0L759.4 196.9L761.7 198.8L764.1 200.7L766.4 202.6L768.7 204.5L770.9 206.4L773.2 208.3L775.4 210.2L777.6 212.1L779.8 214.1L782.0 216.0L784.2 217.9L786.3 219.8L788.4 221.8L790.5 223.7L792.6 225.6L794.7 227.6L796.7 229.5L798.8 231.4L800.8 233.4L802.8 235.3L804.7 237.2L806.7 239.2L808.7 241.1L810.6 243.1L812.5 245.0L814.4 246.9L816.3 248.9L818.1 250.8L820.0 252.7L821.8 254.7L823.7 256.6L825.5 258.6L827.3 260.5L829.0 262.4L830.8 264.3L832.6 266.3L834.3 268.2L836.0 270.1L837.7 272.1"/><path d="M757.0 195.0L754.3 196.3L751.5 197.6L748.8 198.8L746.2 200.2L743.5 201.5L740.8 202.8L738.2 204.2L735.6 205.5L733.0 206.9L730.4 208.3L727.8 209.6L725.3 211.0L722.7 212.5L720.2 213.9L717.7 215.3L715.2 216.8L712.7 218.2L710.3 219.7L707.8 221.1L705.4 222.6L703.0 224.1L700.6 225.6L698.2 227.1L695.9 228.6L693.5 230.1L691.2 231.6L688.9 233.2L686.6 234.7L684.3 236.2L682.0 237.8L679.8 239.3L677.5 240.9L675.3 242.4L673.1 244.0L670.9 245.6L668.7 247.2L666.6 248.8L664.4 250.3L662.3 251.9L660.2 253.5"/><path d="M757.0 195.0L754.1 196.6L751.3 198.2L748.4 199.9L745.6 201.5L742.8 203.2L740.1 204.9L737.3 206.6L734.6 208.3L731.9 210.0L729.2 211.7L726.6 213.4L723.9 215.1L721.3 216.9L718.7 218.6L716.1 220.4L713.6 222.2L711.0 224.0L708.5 225.7L706.0 227.5L703.5 229.3L701.1 231.1L698.6 232.9L696.2 234.8L693.8 236.6L691.4 238.4L689.1 240.2L686.7 242.1L684.4 243.9L682.1 245.8L679.8 247.6L677.5 249.5L675.3 251.3L673.0 253.2L670.8 255.0L668.6 256.9L666.4 258.8L664.2 260.6L662.1 262.5L660.0 264.4L657.8 266.3"/><path d="M757.0 195.0L754.0 197.1L751.0 199.2L748.0 201.4L745.0 203.5L742.1 205.7L739.2 207.8L736.4 210.0L733.5 212.1L730.7 214.3L728.0 216.5L725.2 218.7L722.5 220.9L719.8 223.1L717.1 225.3L714.5 227.5L711.9 229.8L709.3 232.0L706.7 234.2L704.2 236.5L701.7 238.7L699.2 240.9L696.7 243.2L694.2 245.4L691.8 247.7L689.4 249.9L687.1 252.1L684.7 254.4L682.4 256.6L680.1 258.9L677.8 261.1L675.5 263.4L673.3 265.6L671.0 267.9L668.8 270.1L666.6 272.4L664.5 274.6L662.3 276.9L660.2 279.1L658.1 281.4L656.0 283.6"/><path d="M757.0 195.0L754.0 197.6L751.1 200.2L748.1 202.8L745.3 205.4L742.4 208.0L739.6 210.6L736.8 213.2L734.1 215.8L731.4 218.5L728.7 221.1L726.0 223.7L723.4 226.3L720.8 228.9L718.3 231.6L715.7 234.2L713.2 236.8L710.8 239.4L708.3 242.0L705.9 244.6L703.5 247.2L701.1 249.8L698.8 252.4L696.5 255.0L694.2 257.6L691.9 260.2L689.7 262.8L687.5 265.4L685.3 268.0L683.1 270.6L681.0 273.2L678.8 275.7L676.7 278.3L674.7 280.9L672.6 283.4L670.5 286.0L668.5 288.5L666.5 291.1L664.5 293.6L662.6 296.1L660.6 298.7"/><path d="M757.0 195.0L754.4 197.5L751.9 200.1L749.4 202.6L746.9 205.1L744.4 207.6L742.0 210.2L739.6 212.7L737.2 215.2L734.9 217.7L732.6 220.2L730.3 222.8L728.0 225.3L725.8 227.8L723.6 230.3L721.4 232.8L719.2 235.3L717.1 237.8L714.9 240.3L712.8 242.8L710.8 245.3L708.7 247.8L706.7 250.2L704.7 252.7L702.7 255.2L700.7 257.7L698.8 260.1L696.8 262.6L694.9 265.0L693.0 267.5L691.1 269.9L689.3 272.3L687.5 274.8L685.6 277.2L683.8 279.6L682.0 282.0L680.3 284.5L678.5 286.9L676.8 289.3L675.1 291.7L673.3 294.0"/><path d="M757.0 195.0L754.7 197.8L752.4 200.6L750.1 203.3L747.9 206.1L745.7 208.9L743.5 211.6L741.4 214.4L739.2 217.1L737.1 219.9L735.1 222.6L733.0 225.3L731.0 228.0L729.0 230.8L727.0 233.5L725.1 236.1L723.1 238.8L721.2 241.5L719.4 244.2L717.5 246.8L715.7 249.5L713.8 252.2L712.0 254.8L710.2 257.4L708.5 260.0L706.7 262.7L705.0 265.3L703.3 267.9L701.6 270.5L699.9 273.1L698.3 275.6L696.7 278.2L695.0 280.8L693.4 283.3L691.8 285.9L690.3 288.4L688.7 290.9L687.2 293.5L685.6 296.0L684.1 298.5L682.6 301.0"/><path d="M757.0 195.0L754.9 196.9L752.9 198.9L750.9 200.8L748.9 202.8L746.9 204.7L744.9 206.7L743.0 208.6L741.1 210.5L739.2 212.5L737.3 214.4L735.4 216.4L733.5 218.3L731.7 220.3L729.8 222.2L728.0 224.1L726.2 226.1L724.4 228.0L722.7 230.0L720.9 231.9L719.2 233.8L717.5 235.8L715.8 237.7L714.1 239.6L712.4 241.5L710.7 243.5L709.1 245.4L707.4 247.3L705.8 249.2L704.2 251.1L702.6 253.1L701.0 255.0L699.4 256.9L697.8 258.8L696.3 260.7L694.8 262.6L693.2 264.5L691.7 266.4L690.2 268.3L688.7 270.2L687.2 272.1"/><path d="M757.0 195.0L755.5 197.2L753.9 199.4L752.4 201.6L751.0 203.8L749.5 206.0L748.0 208.2L746.6 210.4L745.2 212.6L743.7 214.7L742.3 216.9L741.0 219.1L739.6 221.2L738.2 223.4L736.9 225.5L735.5 227.6L734.2 229.8L732.9 231.9L731.6 234.0L730.3 236.1L729.1 238.2L727.8 240.3L726.5 242.4L725.3 244.5L724.1 246.5L722.9 248.6L721.6 250.7L720.5 252.7L719.3 254.8L718.1 256.8L716.9 258.9L715.8 260.9L714.6 263.0L713.5 265.0L712.3 267.0L711.2 269.0L710.1 271.0L709.0 273.0L707.9 275.0L706.8 277.0L705.8 279.0"/><path d="M757.0 195.0L755.8 197.4L754.5 199.8L753.3 202.1L752.1 204.5L751.0 206.8L749.8 209.2L748.6 211.5L747.5 213.8L746.4 216.1L745.2 218.4L744.1 220.7L743.0 223.0L742.0 225.3L740.9 227.6L739.8 229.8L738.8 232.1L737.7 234.3L736.7 236.5L735.7 238.8L734.6 241.0L733.6 243.2L732.7 245.4L731.7 247.6L730.7 249.8L729.7 251.9L728.8 254.1L727.8 256.3L726.9 258.4L725.9 260.5L725.0 262.7L724.1 264.8L723.2 266.9L722.3 269.0L721.4 271.1L720.5 273.2L719.6 275.3L718.8 277.4L717.9 279.5L717.0 281.6L716.2 283.6"/><path d="M757.0 195.0L755.9 196.8L754.8 198.7L753.8 200.5L752.7 202.4L751.7 204.2L750.6 206.0L749.6 207.8L748.6 209.7L747.5 211.5L746.5 213.3L745.5 215.1L744.5 216.9L743.6 218.6L742.6 220.4L741.6 222.2L740.7 224.0L739.7 225.7L738.8 227.5L737.8 229.3L736.9 231.0L736.0 232.8L735.1 234.5L734.1 236.3L733.2 238.0L732.3 239.7L731.5 241.4L730.6 243.2L729.7 244.9L728.8 246.6L728.0 248.3L727.1 250.0L726.3 251.7L725.4 253.4L724.6 255.1L723.7 256.8L722.9 258.4L722.1 260.1L721.3 261.8L720.5 263.4L719.7 265.1"/><path d="M757.0 195.0L756.1 197.2L755.1 199.4L754.2 201.6L753.3 203.8L752.4 205.9L751.5 208.1L750.6 210.2L749.7 212.4L748.9 214.5L748.0 216.6L747.2 218.7L746.3 220.8L745.5 222.9L744.6 225.0L743.8 227.1L743.0 229.2L742.2 231.2L741.4 233.3L740.6 235.3L739.8 237.4L739.0 239.4L738.3 241.4L737.5 243.5L736.8 245.5L736.0 247.5L735.3 249.5L734.5 251.5L733.8 253.4L733.1 255.4L732.3 257.4L731.6 259.3L730.9 261.3L730.2 263.2L729.5 265.2L728.8 267.1L728.1 269.0L727.5 271.0L726.8 272.9L726.1 274.8L725.4 276.7"/><path d="M757.0 195.0L757.1 197.0L757.3 198.9L757.4 200.9L757.5 202.8L757.6 204.7L757.7 206.6L757.9 208.5L758.0 210.4L758.1 212.3L758.2 214.2L758.3 216.1L758.4 218.0L758.6 219.8L758.7 221.7L758.8 223.5L758.9 225.4L759.0 227.2L759.1 229.0L759.2 230.8L759.3 232.6L759.4 234.4L759.6 236.2L759.7 238.0L759.8 239.8L759.9 241.6L760.0 243.3L760.1 245.1L760.2 246.9L760.3 248.6L760.4 250.3L760.5 252.1L760.6 253.8L760.7 255.5L760.8 257.3L760.9 259.0L761.0 260.7L761.1 262.4L761.1 264.1L761.2 265.7L761.3 267.4"/><path d="M757.0 195.0L757.6 196.7L758.2 198.5L758.8 200.2L759.3 202.0L759.9 203.7L760.5 205.4L761.0 207.1L761.6 208.8L762.2 210.5L762.7 212.2L763.3 213.9L763.8 215.6L764.3 217.2L764.9 218.9L765.4 220.6L765.9 222.2L766.5 223.9L767.0 225.5L767.5 227.2L768.0 228.8L768.5 230.4L769.0 232.1L769.5 233.7L770.0 235.3L770.5 236.9L771.0 238.5L771.5 240.1L772.0 241.7L772.5 243.3L772.9 244.9L773.4 246.5L773.9 248.0L774.3 249.6L774.8 251.2L775.3 252.7L775.7 254.3L776.2 255.8L776.6 257.4L777.1 258.9L777.5 260.5"/><path d="M757.0 195.0L757.9 197.0L758.9 198.9L759.8 200.9L760.7 202.8L761.6 204.7L762.5 206.7L763.4 208.6L764.3 210.5L765.2 212.4L766.0 214.3L766.9 216.2L767.8 218.1L768.6 220.0L769.5 221.9L770.3 223.7L771.1 225.6L771.9 227.5L772.7 229.3L773.5 231.1L774.3 233.0L775.1 234.8L775.9 236.6L776.7 238.5L777.5 240.3L778.3 242.1L779.0 243.9L779.8 245.7L780.5 247.5L781.3 249.3L782.0 251.1L782.7 252.8L783.5 254.6L784.2 256.4L784.9 258.1L785.6 259.9L786.3 261.6L787.0 263.4L787.7 265.1L788.4 266.9L789.1 268.6"/><path d="M757.0 195.0L758.4 196.9L759.7 198.7L761.1 200.6L762.4 202.4L763.8 204.2L765.1 206.1L766.4 207.9L767.7 209.8L769.0 211.6L770.2 213.4L771.5 215.2L772.8 217.0L774.0 218.8L775.2 220.7L776.5 222.5L777.7 224.3L778.9 226.1L780.1 227.8L781.3 229.6L782.4 231.4L783.6 233.2L784.7 235.0L785.9 236.7L787.0 238.5L788.2 240.3L789.3 242.0L790.4 243.8L791.5 245.5L792.6 247.3L793.7 249.0L794.8 250.8L795.8 252.5L796.9 254.2L798.0 256.0L799.0 257.7L800.1 259.4L801.1 261.1L802.1 262.9L803.2 264.6L804.2 266.3"/><path d="M757.0 195.0L758.8 196.7L760.6 198.4L762.4 200.1L764.1 201.8L765.9 203.5L767.6 205.2L769.3 206.9L771.0 208.6L772.7 210.4L774.4 212.1L776.0 213.8L777.7 215.5L779.3 217.2L780.9 218.9L782.6 220.6L784.2 222.3L785.7 224.0L787.3 225.7L788.9 227.4L790.4 229.1L792.0 230.8L793.5 232.5L795.0 234.2L796.5 235.9L798.0 237.6L799.5 239.3L801.0 241.0L802.4 242.7L803.9 244.3L805.3 246.0L806.8 247.7L808.2 249.4L809.6 251.1L811.0 252.8L812.4 254.4L813.8 256.1L815.2 257.8L816.5 259.5L817.9 261.1L819.2 262.8"/><path d="M757.0 195.0L756.0 197.9L755.0 200.8L754.1 203.7L753.1 206.5L752.2 209.3L751.3 212.2L750.4 215.0L749.5 217.8L748.6 220.5L747.7 223.3L746.8 226.0L746.0 228.8L745.1 231.5L744.3 234.2L743.5 236.8L742.7 239.5L741.9 242.2L741.1 244.8L740.3 247.4L739.5 250.0L738.7 252.6L737.9 255.2L737.2 257.8L736.4 260.4L735.7 262.9L735.0 265.5L734.2 268.0L733.5 270.5L732.8 273.0L732.1 275.5L731.4 278.0L730.7 280.5L730.1 282.9L729.4 285.4L728.7 287.8L728.0 290.2L727.4 292.6L726.7 295.1L726.1 297.5L725.4 299.8"/><path d="M757.0 195.0L757.2 197.9L757.5 200.8L757.7 203.6L758.0 206.5L758.2 209.3L758.4 212.1L758.6 214.9L758.9 217.7L759.1 220.4L759.3 223.2L759.5 225.9L759.7 228.6L759.9 231.3L760.1 233.9L760.3 236.6L760.5 239.2L760.7 241.9L760.9 244.5L761.1 247.1L761.3 249.7L761.5 252.2L761.7 254.8L761.9 257.3L762.1 259.8L762.3 262.4L762.4 264.9L762.6 267.4L762.8 269.8L763.0 272.3L763.2 274.8L763.3 277.2L763.5 279.6L763.7 282.0L763.8 284.5L764.0 286.9L764.2 289.2L764.3 291.6L764.5 294.0L764.6 296.3L764.8 298.7"/><path d="M757.0 195.0L757.8 197.5L758.5 200.0L759.3 202.5L760.0 205.0L760.7 207.5L761.5 210.0L762.2 212.4L762.9 214.8L763.6 217.3L764.3 219.7L765.0 222.1L765.6 224.5L766.3 226.8L767.0 229.2L767.6 231.5L768.3 233.9L768.9 236.2L769.6 238.5L770.2 240.9L770.8 243.1L771.4 245.4L772.1 247.7L772.7 250.0L773.3 252.2L773.9 254.5L774.4 256.7L775.0 259.0L775.6 261.2L776.2 263.4L776.7 265.6L777.3 267.8L777.9 270.0L778.4 272.1L779.0 274.3L779.5 276.4L780.1 278.6L780.6 280.7L781.1 282.9L781.6 285.0L782.2 287.1"/><path d="M757.0 195.0L758.1 197.7L759.3 200.4L760.4 203.1L761.5 205.8L762.5 208.4L763.6 211.1L764.7 213.7L765.7 216.3L766.7 218.9L767.7 221.5L768.7 224.1L769.7 226.7L770.7 229.2L771.7 231.8L772.7 234.3L773.6 236.8L774.5 239.3L775.5 241.8L776.4 244.3L777.3 246.8L778.2 249.2L779.1 251.7L780.0 254.1L780.8 256.5L781.7 259.0L782.6 261.4L783.4 263.8L784.3 266.2L785.1 268.5L785.9 270.9L786.7 273.3L787.5 275.6L788.3 277.9L789.1 280.3L789.9 282.6L790.7 284.9L791.5 287.2L792.2 289.5L793.0 291.8L793.7 294.0"/><path d="M757.0 195.0L758.0 198.1L759.0 201.1L760.0 204.2L761.0 207.2L761.9 210.2L762.9 213.2L763.8 216.2L764.7 219.1L765.6 222.1L766.5 225.0L767.4 227.9L768.3 230.8L769.2 233.6L770.0 236.5L770.8 239.3L771.7 242.1L772.5 244.9L773.3 247.7L774.1 250.5L774.9 253.2L775.7 256.0L776.5 258.7L777.2 261.4L778.0 264.1L778.7 266.8L779.5 269.5L780.2 272.1L780.9 274.8L781.7 277.4L782.4 280.1L783.1 282.7L783.8 285.3L784.5 287.8L785.1 290.4L785.8 293.0L786.5 295.5L787.2 298.1L787.8 300.6L788.5 303.1L789.1 305.6"/><path d="M757.0 195.0L759.6 197.4L762.2 199.7L764.8 202.1L767.4 204.5L769.9 206.9L772.4 209.3L774.9 211.6L777.3 214.0L779.7 216.4L782.1 218.8L784.5 221.2L786.8 223.6L789.1 226.0L791.4 228.3L793.7 230.7L795.9 233.1L798.1 235.5L800.3 237.9L802.5 240.2L804.6 242.6L806.8 245.0L808.9 247.3L811.0 249.7L813.0 252.1L815.1 254.4L817.1 256.8L819.1 259.1L821.1 261.5L823.1 263.8L825.0 266.2L826.9 268.5L828.8 270.9L830.7 273.2L832.6 275.5L834.5 277.8L836.3 280.2L838.1 282.5L840.0 284.8L841.7 287.1L843.5 289.4"/><path d="M757.0 195.0L760.0 197.7L762.9 200.4L765.7 203.1L768.6 205.9L771.4 208.6L774.2 211.3L776.9 214.0L779.6 216.7L782.3 219.5L784.9 222.2L787.5 224.9L790.1 227.6L792.7 230.3L795.2 233.0L797.7 235.7L800.1 238.5L802.5 241.2L804.9 243.9L807.3 246.6L809.7 249.3L812.0 251.9L814.3 254.6L816.5 257.3L818.8 260.0L821.0 262.7L823.2 265.3L825.4 268.0L827.5 270.7L829.6 273.3L831.7 276.0L833.8 278.6L835.9 281.2L837.9 283.9L839.9 286.5L841.9 289.1L843.9 291.7L845.9 294.4L847.8 297.0L849.7 299.6L851.6 302.2"/><path d="M757.0 195.0L760.3 196.5L763.6 198.0L766.8 199.5L770.1 201.0L773.3 202.6L776.4 204.2L779.6 205.8L782.7 207.4L785.9 209.0L789.0 210.6L792.0 212.3L795.1 214.0L798.1 215.6L801.1 217.3L804.1 219.1L807.0 220.8L809.9 222.5L812.8 224.3L815.7 226.0L818.6 227.8L821.4 229.6L824.2 231.4L827.0 233.2L829.8 235.0L832.6 236.8L835.3 238.7L838.0 240.5L840.7 242.4L843.4 244.2L846.0 246.1L848.6 248.0L851.2 249.8L853.8 251.7L856.4 253.6L858.9 255.5L861.4 257.4L863.9 259.3L866.4 261.3L868.9 263.2L871.3 265.1"/><path d="M757.0 195.0L761.1 196.5L765.1 198.1L769.1 199.6L773.0 201.2L777.0 202.9L780.9 204.6L784.7 206.2L788.6 208.0L792.4 209.7L796.2 211.5L799.9 213.3L803.6 215.1L807.3 217.0L811.0 218.8L814.6 220.7L818.2 222.7L821.8 224.6L825.3 226.5L828.8 228.5L832.3 230.5L835.7 232.5L839.1 234.6L842.5 236.6L845.9 238.7L849.2 240.7L852.5 242.8L855.8 244.9L859.0 247.0L862.2 249.2L865.4 251.3L868.5 253.4L871.6 255.6L874.7 257.8L877.8 259.9L880.8 262.1L883.8 264.3L886.8 266.5L889.8 268.8L892.7 271.0L895.6 273.2"/><path d="M757.0 195.0L760.9 197.4L764.8 199.8L768.6 202.2L772.4 204.6L776.2 207.0L779.9 209.5L783.5 212.0L787.1 214.5L790.7 217.0L794.3 219.5L797.8 222.1L801.2 224.6L804.6 227.2L808.0 229.8L811.4 232.4L814.7 235.0L817.9 237.6L821.2 240.2L824.4 242.8L827.5 245.4L830.7 248.1L833.8 250.7L836.8 253.3L839.8 256.0L842.8 258.6L845.8 261.3L848.7 264.0L851.6 266.6L854.5 269.3L857.3 272.0L860.1 274.6L862.9 277.3L865.6 280.0L868.3 282.6L871.0 285.3L873.7 288.0L876.3 290.7L878.9 293.3L881.5 296.0L884.0 298.7"/><path d="M757.0 195.0L761.5 197.6L765.9 200.3L770.3 202.9L774.6 205.7L778.9 208.4L783.1 211.1L787.2 213.9L791.3 216.7L795.4 219.5L799.4 222.4L803.3 225.2L807.2 228.1L811.1 231.0L814.9 233.9L818.6 236.8L822.4 239.7L826.0 242.6L829.6 245.6L833.2 248.5L836.7 251.5L840.2 254.5L843.7 257.4L847.1 260.4L850.4 263.4L853.7 266.4L857.0 269.4L860.2 272.4L863.4 275.4L866.6 278.4L869.7 281.4L872.8 284.4L875.9 287.4L878.9 290.4L881.9 293.4L884.8 296.4L887.7 299.4L890.6 302.4L893.5 305.4L896.3 308.4L899.1 311.4"/><path d="M757.0 195.0L761.9 197.8L766.7 200.6L771.5 203.5L776.2 206.4L780.8 209.4L785.4 212.3L789.9 215.3L794.3 218.3L798.7 221.4L803.0 224.4L807.3 227.5L811.5 230.6L815.7 233.7L819.8 236.9L823.8 240.0L827.8 243.2L831.7 246.3L835.6 249.5L839.4 252.7L843.2 255.9L846.9 259.1L850.6 262.4L854.3 265.6L857.8 268.8L861.4 272.0L864.9 275.3L868.3 278.5L871.7 281.8L875.1 285.0L878.4 288.3L881.7 291.5L884.9 294.7L888.1 298.0L891.3 301.2L894.4 304.5L897.5 307.7L900.6 311.0L903.6 314.2L906.6 317.4L909.5 320.7"/><path d="M757.0 195.0L761.8 198.2L766.6 201.5L771.3 204.7L776.0 208.0L780.5 211.4L785.0 214.7L789.4 218.1L793.8 221.4L798.1 224.8L802.3 228.3L806.5 231.7L810.6 235.1L814.6 238.6L818.6 242.0L822.5 245.5L826.4 249.0L830.2 252.4L833.9 255.9L837.6 259.4L841.3 262.9L844.9 266.4L848.4 269.9L851.9 273.3L855.4 276.8L858.8 280.3L862.1 283.8L865.4 287.3L868.7 290.8L871.9 294.3L875.1 297.7L878.3 301.2L881.4 304.7L884.4 308.2L887.5 311.6L890.4 315.1L893.4 318.5L896.3 322.0L899.2 325.4L902.1 328.8L904.9 332.3"/><path d="M757.0 195.0L762.1 198.2L767.1 201.4L772.0 204.6L776.9 207.9L781.6 211.2L786.4 214.6L791.0 217.9L795.6 221.3L800.1 224.7L804.5 228.1L808.9 231.6L813.2 235.0L817.4 238.5L821.6 242.0L825.7 245.4L829.7 248.9L833.7 252.5L837.6 256.0L841.5 259.5L845.3 263.0L849.1 266.5L852.8 270.1L856.5 273.6L860.1 277.1L863.6 280.7L867.2 284.2L870.6 287.7L874.0 291.3L877.4 294.8L880.7 298.3L884.0 301.9L887.3 305.4L890.5 308.9L893.6 312.4L896.8 315.9L899.8 319.4L902.9 322.9L905.9 326.4L908.9 329.9L911.8 333.4"/><path d="M757.0 195.0L761.3 198.7L765.5 202.5L769.7 206.3L773.7 210.0L777.8 213.8L781.7 217.6L785.6 221.3L789.4 225.1L793.1 228.9L796.8 232.7L800.4 236.4L804.0 240.2L807.5 244.0L811.0 247.7L814.3 251.5L817.7 255.3L821.0 259.0L824.2 262.7L827.4 266.5L830.6 270.2L833.7 273.9L836.7 277.6L839.7 281.3L842.7 285.0L845.6 288.7L848.5 292.4L851.3 296.0L854.1 299.7L856.9 303.3L859.7 306.9L862.3 310.6L865.0 314.2L867.6 317.8L870.2 321.4L872.8 324.9L875.3 328.5L877.9 332.1L880.3 335.6L882.8 339.1L885.2 342.7"/><path d="M757.0 195.0L762.8 195.8L768.6 196.7L774.4 197.7L780.1 198.7L785.8 199.8L791.5 201.0L797.1 202.3L802.8 203.6L808.3 205.0L813.9 206.5L819.4 208.0L824.8 209.6L830.3 211.2L835.7 213.0L841.0 214.7L846.3 216.6L851.5 218.4L856.7 220.4L861.9 222.4L867.0 224.4L872.1 226.5L877.1 228.6L882.1 230.8L887.0 233.0L891.9 235.3L896.7 237.6L901.5 239.9L906.2 242.3L910.9 244.7L915.5 247.2L920.1 249.7L924.7 252.2L929.2 254.7L933.6 257.3L938.0 259.9L942.4 262.5L946.7 265.1L950.9 267.8L955.1 270.5L959.3 273.2"/><path d="M757.0 195.0L763.7 195.3L770.3 195.8L776.9 196.3L783.5 196.9L790.1 197.7L796.7 198.5L803.2 199.4L809.7 200.4L816.2 201.6L822.6 202.8L829.1 204.1L835.4 205.5L841.7 207.0L848.0 208.6L854.2 210.2L860.4 212.0L866.6 213.8L872.6 215.7L878.7 217.6L884.6 219.7L890.5 221.8L896.4 224.0L902.2 226.2L908.0 228.5L913.6 230.9L919.3 233.3L924.8 235.8L930.3 238.3L935.8 240.9L941.2 243.5L946.5 246.2L951.8 248.9L957.0 251.7L962.1 254.5L967.2 257.3L972.2 260.2L977.2 263.1L982.1 266.1L986.9 269.1L991.7 272.1"/><path d="M757.0 195.0L763.1 196.6L769.2 198.3L775.2 200.1L781.2 202.0L787.1 203.9L793.0 205.9L798.8 208.0L804.6 210.1L810.3 212.3L815.9 214.6L821.5 216.9L827.0 219.3L832.5 221.7L837.9 224.2L843.3 226.8L848.6 229.4L853.8 232.0L859.0 234.7L864.1 237.4L869.1 240.2L874.1 243.0L879.0 245.8L883.9 248.7L888.7 251.6L893.4 254.5L898.1 257.4L902.8 260.4L907.3 263.4L911.9 266.5L916.3 269.5L920.7 272.6L925.1 275.7L929.4 278.8L933.7 281.9L937.9 285.1L942.0 288.2L946.1 291.4L950.2 294.6L954.2 297.8L958.1 301.0"/><path d="M757.0 195.0L765.1 195.1L773.1 195.3L781.1 195.6L789.2 196.1L797.2 196.8L805.1 197.6L813.1 198.6L821.0 199.7L828.8 200.9L836.6 202.3L844.4 203.8L852.1 205.5L859.8 207.2L867.3 209.1L874.8 211.2L882.3 213.3L889.6 215.6L896.9 217.9L904.1 220.4L911.3 223.0L918.3 225.6L925.3 228.4L932.1 231.2L938.9 234.2L945.6 237.2L952.2 240.3L958.8 243.4L965.2 246.7L971.5 249.9L977.8 253.3L984.0 256.7L990.1 260.2L996.1 263.7L1002.0 267.2L1007.8 270.8L1013.5 274.5L1019.2 278.2L1024.8 281.9L1030.3 285.6L1035.7 289.4"/><path d="M757.0 195.0L752.3 198.0L747.7 201.1L743.1 204.2L738.6 207.3L734.2 210.4L729.8 213.5L725.5 216.7L721.3 219.9L717.1 223.1L713.0 226.3L708.9 229.6L704.9 232.8L700.9 236.1L697.0 239.4L693.2 242.6L689.4 245.9L685.7 249.2L682.0 252.5L678.3 255.8L674.8 259.1L671.2 262.5L667.7 265.8L664.3 269.1L660.9 272.4L657.6 275.7L654.2 279.0L651.0 282.4L647.8 285.7L644.6 289.0L641.4 292.3L638.3 295.6L635.3 299.0L632.2 302.3L629.2 305.6L626.3 308.9L623.4 312.2L620.5 315.5L617.6 318.7L614.8 322.0L612.0 325.3"/><path d="M757.0 195.0L754.0 198.3L751.0 201.6L748.0 204.9L745.1 208.1L742.2 211.4L739.4 214.7L736.6 217.9L733.9 221.2L731.2 224.5L728.5 227.7L725.9 230.9L723.3 234.1L720.8 237.4L718.3 240.6L715.8 243.8L713.4 247.0L710.9 250.1L708.6 253.3L706.2 256.5L703.9 259.6L701.6 262.8L699.3 265.9L697.1 269.0L694.9 272.2L692.7 275.3L690.6 278.4L688.5 281.4L686.4 284.5L684.3 287.6L682.2 290.6L680.2 293.7L678.2 296.7L676.2 299.7L674.3 302.8L672.3 305.8L670.4 308.8L668.5 311.8L666.6 314.7L664.8 317.7L662.9 320.7"/><path d="M757.0 195.0L753.8 198.7L750.7 202.4L747.7 206.1L744.7 209.7L741.8 213.4L738.9 217.0L736.0 220.7L733.2 224.3L730.5 227.9L727.7 231.5L725.1 235.1L722.4 238.6L719.8 242.2L717.3 245.8L714.8 249.3L712.3 252.8L709.9 256.3L707.5 259.8L705.1 263.3L702.7 266.8L700.4 270.2L698.2 273.7L695.9 277.1L693.7 280.5L691.5 283.9L689.4 287.3L687.2 290.7L685.1 294.0L683.1 297.4L681.0 300.7L679.0 304.0L677.0 307.4L675.0 310.7L673.1 313.9L671.1 317.2L669.2 320.5L667.3 323.7L665.5 327.0L663.6 330.2L661.8 333.4"/><path d="M757.0 195.0L748.5 181.1L739.4 166.9L729.7 152.4L719.2 137.6L707.9 122.6L695.7 107.3L682.4 91.8L668.0 76.2L652.3 60.6L635.2 45.0L616.6 29.6L596.4 14.7L574.4 0.4L550.7 -13.0L525.1 -25.1L497.8 -35.6L469.0 -44.0L439.0 -50.2L408.1 -53.7L376.8 -54.4L345.7 -52.3L315.2 -47.4L285.7 -40.1L257.6 -30.6L231.2 -19.3L206.5 -6.5L183.7 7.4L162.6 22.0L143.2 37.2L125.3 52.7L109.0 68.4L93.9 84.0L80.1 99.5L67.4 114.9L55.6 130.1L44.7 145.0L34.6 159.6L25.2 174.0L16.4 188.0L8.2 201.8"/><path d="M757.0 195.0L745.7 180.4L733.5 165.6L720.4 150.6L706.3 135.6L691.1 120.5L674.6 105.4L656.8 90.6L637.5 76.1L616.7 62.1L594.3 48.9L570.3 36.8L544.6 26.0L517.5 16.8L489.2 9.7L459.8 4.7L429.9 2.2L399.7 2.3L369.7 4.9L340.4 10.0L312.2 17.3L285.1 26.6L259.6 37.4L235.7 49.7L213.3 62.9L192.6 76.9L173.4 91.4L155.7 106.3L139.3 121.3L124.1 136.4L110.1 151.5L97.1 166.4L84.9 181.2L73.7 195.8L63.1 210.2L53.2 224.4L44.0 238.3L35.2 252.0L27.0 265.5L19.1 278.7L11.7 291.7"/><path d="M757.0 195.0L744.3 181.1L730.6 167.2L716.0 153.3L700.4 139.4L683.7 125.8L665.7 112.4L646.4 99.5L625.9 87.3L603.9 75.9L580.7 65.5L556.2 56.4L530.5 48.9L503.9 43.1L476.6 39.3L448.8 37.5L421.0 37.9L393.3 40.4L366.2 45.0L339.9 51.5L314.7 59.6L290.6 69.2L267.9 79.9L246.4 91.7L226.4 104.2L207.6 117.3L190.1 130.7L173.7 144.5L158.5 158.3L144.3 172.3L131.0 186.2L118.5 200.1L106.9 213.8L95.9 227.4L85.6 240.9L75.8 254.2L66.6 267.3L57.9 280.2L49.5 293.0L41.6 305.6L34.0 318.0"/><path d="M757.0 195.0L745.9 188.6L734.6 182.5L722.8 176.6L710.8 170.9L698.4 165.6L685.7 160.5L672.7 155.8L659.4 151.5L645.8 147.6L632.0 144.1L617.9 141.1L603.7 138.6L589.2 136.6L574.7 135.1L560.0 134.2L545.3 133.8L530.6 133.9L516.0 134.7L501.4 135.9L486.9 137.7L472.6 140.0L458.4 142.8L444.5 146.1L430.8 149.8L417.4 154.0L404.2 158.5L391.4 163.4L378.9 168.7L366.7 174.2L354.8 180.0L343.3 186.1L332.1 192.3L321.3 198.8L310.7 205.4L300.5 212.2L290.6 219.1L281.0 226.1L271.7 233.2L262.7 240.4L254.0 247.6"/><path d="M757.0 195.0L745.6 189.9L734.0 185.1L722.1 180.6L710.0 176.4L697.6 172.5L685.0 168.9L672.2 165.7L659.2 162.9L646.0 160.5L632.7 158.5L619.3 157.0L605.7 155.9L592.2 155.3L578.5 155.1L564.9 155.4L551.4 156.1L537.9 157.3L524.5 158.9L511.2 161.0L498.0 163.5L485.1 166.4L472.3 169.7L459.7 173.3L447.4 177.3L435.3 181.6L423.5 186.2L411.9 191.0L400.6 196.2L389.6 201.5L378.9 207.1L368.4 212.8L358.2 218.7L348.3 224.7L338.6 230.9L329.2 237.2L320.1 243.6L311.2 250.1L302.5 256.6L294.1 263.2L285.9 269.9"/><path d="M757.0 195.0L745.0 189.6L732.7 184.5L720.2 179.7L707.3 175.3L694.2 171.2L680.8 167.5L667.2 164.3L653.4 161.4L639.4 159.1L625.3 157.2L611.0 155.8L596.7 154.9L582.3 154.5L567.9 154.6L553.5 155.3L539.2 156.4L525.1 158.1L511.0 160.2L497.1 162.8L483.4 165.9L469.9 169.4L456.6 173.3L443.7 177.5L430.9 182.2L418.5 187.1L406.4 192.4L394.6 197.9L383.1 203.6L371.8 209.6L361.0 215.8L350.4 222.1L340.1 228.6L330.1 235.2L320.3 242.0L310.9 248.8L301.7 255.7L292.8 262.7L284.2 269.8L275.8 276.9L267.6 284.0"/><path d="M757.0 195.0L742.2 186.9L726.9 179.1L710.9 171.8L694.4 165.0L677.4 158.9L659.9 153.3L641.9 148.5L623.6 144.5L604.8 141.3L585.9 138.9L566.7 137.5L547.4 137.1L528.2 137.5L509.0 138.9L490.0 141.3L471.3 144.5L453.0 148.5L435.0 153.3L417.5 158.9L400.5 165.1L384.0 171.9L368.1 179.2L352.7 186.9L337.9 195.0L323.7 203.5L310.0 212.3L296.9 221.2L284.3 230.4L272.2 239.7L260.6 249.2L249.4 258.7L238.7 268.2L228.4 277.8L218.4 287.5L208.8 297.1L199.6 306.7L190.6 316.3L182.0 325.9L173.6 335.5L165.5 345.0"/><path d="M757.0 195.0L751.1 196.4L745.3 197.9L739.5 199.5L733.8 201.1L728.1 202.8L722.4 204.6L716.8 206.5L711.3 208.4L705.8 210.3L700.3 212.4L694.9 214.4L689.6 216.6L684.3 218.8L679.0 221.0L673.8 223.3L668.7 225.7L663.6 228.0L658.5 230.5L653.6 232.9L648.6 235.5L643.8 238.0L638.9 240.6L634.2 243.2L629.5 245.9L624.8 248.6L620.2 251.3L615.6 254.0L611.1 256.8L606.7 259.6L602.3 262.4L598.0 265.3L593.7 268.1L589.4 271.0L585.2 273.9L581.1 276.9L577.0 279.8L572.9 282.8L568.9 285.7L564.9 288.7L561.0 291.7"/><path d="M757.0 195.0L742.1 190.9L726.9 187.3L711.4 184.2L695.8 181.7L680.0 179.7L664.0 178.4L648.0 177.6L631.9 177.5L615.9 178.0L599.9 179.2L584.0 180.9L568.3 183.2L552.8 186.1L537.5 189.6L522.5 193.5L507.7 197.9L493.3 202.8L479.3 208.1L465.5 213.8L452.2 219.8L439.1 226.1L426.5 232.6L414.2 239.4L402.3 246.5L390.8 253.7L379.6 261.1L368.7 268.6L358.1 276.2L347.9 283.9L338.0 291.7L328.3 299.6L318.9 307.5L309.8 315.5L301.0 323.5L292.3 331.5L283.9 339.5L275.7 347.5L267.8 355.6L259.9 363.6L252.3 371.6"/><path d="M757.0 195.0L739.5 187.0L721.4 179.6L702.7 172.9L683.4 167.0L663.6 162.0L643.3 157.9L622.6 154.8L601.7 152.8L580.6 151.8L559.5 152.0L538.5 153.3L517.6 155.7L497.1 159.1L476.9 163.5L457.2 168.8L438.1 175.0L419.6 181.9L401.7 189.5L384.4 197.7L367.8 206.4L351.9 215.5L336.7 224.9L322.1 234.7L308.1 244.7L294.7 254.9L281.8 265.2L269.5 275.6L257.6 286.1L246.3 296.6L235.4 307.1L224.8 317.7L214.7 328.3L204.9 338.8L195.4 349.3L186.2 359.8L177.3 370.2L168.6 380.6L160.2 390.9L152.0 401.2L143.9 411.5"/><path d="M757.0 195.0L742.8 207.9L729.4 220.9L716.8 233.8L704.8 246.7L693.5 259.6L682.8 272.4L672.6 285.0L662.9 297.6L653.6 310.0L644.7 322.3L636.2 334.5L628.0 346.6L620.1 358.5L612.5 370.3L605.1 382.0L597.9 393.6L590.9 405.1L584.1 416.6L577.4 427.9L570.9 439.2L564.4 450.4L558.1 461.5L551.8 472.6L545.7 483.6L539.5 494.7L533.4 505.7L527.4 516.6L521.3 527.6L515.2 538.6L509.1 549.6L503.0 560.6L496.9 571.6L490.6 582.7L484.3 593.8L477.9 605.0L471.4 616.3L464.8 627.6L458.0 639.0L451.1 650.4L444.0 662.0"/><path d="M757.0 195.0L752.1 199.1L747.3 203.2L742.6 207.4L737.9 211.5L733.4 215.7L728.9 219.9L724.6 224.0L720.3 228.2L716.0 232.4L711.9 236.6L707.8 240.7L703.8 244.9L699.9 249.1L696.1 253.3L692.3 257.4L688.6 261.6L684.9 265.7L681.3 269.9L677.8 274.0L674.3 278.1L670.8 282.2L667.5 286.3L664.1 290.4L660.9 294.5L657.7 298.5L654.5 302.6L651.4 306.6L648.3 310.7L645.2 314.7L642.2 318.7L639.3 322.7L636.4 326.7L633.5 330.6L630.6 334.6L627.8 338.6L625.1 342.5L622.3 346.4L619.6 350.3L616.9 354.2L614.3 358.1"/><path d="M757.0 195.0L752.3 199.2L747.7 203.3L743.1 207.5L738.7 211.7L734.3 215.9L730.0 220.1L725.8 224.3L721.7 228.5L717.7 232.7L713.7 236.9L709.8 241.1L706.0 245.3L702.2 249.4L698.5 253.6L694.9 257.8L691.3 261.9L687.8 266.1L684.3 270.2L680.9 274.3L677.6 278.4L674.3 282.5L671.1 286.6L667.9 290.7L664.7 294.8L661.6 298.8L658.6 302.8L655.6 306.9L652.6 310.9L649.7 314.9L646.8 318.9L644.0 322.8L641.2 326.8L638.4 330.7L635.7 334.7L633.0 338.6L630.3 342.5L627.7 346.4L625.1 350.3L622.5 354.1L620.0 358.0"/><path d="M757.0 195.0L762.0 199.3L766.8 203.6L771.6 207.9L776.3 212.3L780.9 216.6L785.4 221.0L789.8 225.3L794.2 229.7L798.4 234.0L802.6 238.3L806.7 242.7L810.7 247.0L814.6 251.4L818.5 255.7L822.3 260.0L826.0 264.3L829.7 268.6L833.3 272.9L836.9 277.1L840.4 281.4L843.8 285.7L847.2 289.9L850.5 294.1L853.8 298.3L857.0 302.5L860.2 306.7L863.3 310.9L866.4 315.1L869.4 319.2L872.4 323.3L875.4 327.4L878.3 331.6L881.2 335.6L884.0 339.7L886.8 343.8L889.6 347.8L892.3 351.9L895.0 355.9L897.7 359.9L900.3 363.9"/><path d="M757.0 195.0L762.1 211.1L766.8 226.8L771.2 241.9L775.4 256.6L779.3 270.9L783.0 284.8L786.5 298.4L789.8 311.7L793.0 324.7L796.0 337.4L798.9 349.9L801.7 362.2L804.5 374.3L807.1 386.2L809.7 397.9L812.2 409.5L814.6 421.0L817.0 432.3L819.3 443.6L821.6 454.7L823.9 465.8L826.1 476.8L828.4 487.8L830.6 498.7L832.8 509.6L835.0 520.5L837.1 531.3L839.3 542.2L841.5 553.1L843.7 564.1L846.0 575.0L848.2 586.1L850.5 597.2L852.8 608.3L855.2 619.6L857.6 631.0L860.0 642.5L862.5 654.1L865.1 665.9L867.8 677.9"/><path d="M757.0 195.0L762.8 191.3L768.7 187.6L774.7 184.0L780.8 180.4L787.1 176.9L793.4 173.5L799.8 170.1L806.3 166.9L813.0 163.7L819.7 160.5L826.6 157.5L833.5 154.6L840.6 151.8L847.7 149.0L855.0 146.4L862.3 143.9L869.7 141.6L877.3 139.3L884.9 137.2L892.5 135.2L900.3 133.4L908.1 131.7L916.0 130.2L923.9 128.8L931.9 127.6L940.0 126.5L948.1 125.6L956.2 124.9L964.4 124.4L972.5 124.0L980.7 123.8L988.9 123.7L997.1 123.9L1005.2 124.2L1013.4 124.7L1021.5 125.3L1029.6 126.1L1037.7 127.1L1045.7 128.3L1053.7 129.6"/><path d="M757.0 195.0L765.2 195.0L773.4 195.1L781.5 195.3L789.7 195.8L797.8 196.4L805.9 197.1L814.0 198.0L822.1 199.0L830.1 200.2L838.0 201.5L845.9 203.0L853.8 204.6L861.6 206.4L869.3 208.3L877.0 210.3L884.5 212.4L892.1 214.6L899.5 217.0L906.8 219.5L914.1 222.0L921.3 224.7L928.4 227.5L935.4 230.4L942.3 233.3L949.1 236.4L955.9 239.5L962.5 242.7L969.1 245.9L975.5 249.3L981.9 252.7L988.2 256.1L994.4 259.6L1000.5 263.2L1006.5 266.8L1012.4 270.4L1018.3 274.1L1024.0 277.9L1029.7 281.7L1035.3 285.5L1040.8 289.3"/><path d="M757.0 195.0L769.1 194.3L781.3 194.0L793.5 193.9L805.6 194.3L817.8 195.0L829.9 196.0L841.9 197.4L853.8 199.1L865.6 201.1L877.3 203.4L888.9 206.1L900.3 209.0L911.6 212.2L922.7 215.6L933.6 219.3L944.4 223.3L954.9 227.4L965.3 231.8L975.4 236.3L985.3 241.0L995.1 245.9L1004.6 250.9L1014.0 256.0L1023.1 261.3L1032.1 266.7L1040.8 272.2L1049.4 277.7L1057.7 283.4L1065.9 289.1L1073.9 294.8L1081.8 300.7L1089.5 306.5L1097.0 312.5L1104.3 318.4L1111.6 324.4L1118.6 330.4L1125.6 336.4L1132.4 342.5L1139.0 348.5L1145.6 354.6"/><path d="M757.0 195.0L771.5 184.6L786.7 174.5L802.6 164.7L819.3 155.3L836.8 146.5L855.1 138.3L874.1 130.8L893.8 124.1L914.1 118.4L935.0 113.7L956.4 110.2L978.1 107.8L999.9 106.6L1021.9 106.8L1043.8 108.2L1065.4 110.8L1086.7 114.6L1107.5 119.5L1127.7 125.4L1147.2 132.2L1166.1 139.9L1184.2 148.2L1201.5 157.2L1218.1 166.6L1233.9 176.5L1248.9 186.7L1263.2 197.1L1276.9 207.8L1289.9 218.6L1302.2 229.5L1314.0 240.4L1325.2 251.4L1336.0 262.4L1346.2 273.3L1356.0 284.2L1365.5 295.1L1374.5 305.9L1383.2 316.6L1391.6 327.3L1399.7 337.9"/><path d="M757.0 195.0L768.9 180.2L781.6 165.2L795.3 150.1L810.1 135.0L826.1 119.8L843.4 104.8L862.1 90.1L882.3 75.8L904.1 62.2L927.6 49.5L952.6 38.0L979.2 28.0L1007.1 19.9L1036.2 13.9L1066.1 10.3L1096.4 9.2L1126.6 10.7L1156.4 14.8L1185.3 21.1L1213.0 29.6L1239.3 39.9L1264.1 51.6L1287.2 64.5L1308.8 78.2L1328.7 92.6L1347.2 107.4L1364.2 122.5L1380.0 137.6L1394.6 152.8L1408.2 167.8L1420.7 182.8L1432.5 197.6L1443.4 212.1L1453.7 226.5L1463.3 240.6L1472.3 254.5L1480.9 268.1L1489.0 281.5L1496.7 294.7L1504.0 307.7"/><path d="M757.0 195.0L771.5 197.1L785.8 199.8L800.0 202.8L813.9 206.3L827.6 210.2L841.0 214.5L854.2 219.2L867.1 224.1L879.7 229.4L892.0 235.0L904.0 240.8L915.7 246.8L927.1 253.0L938.1 259.4L949.0 266.0L959.5 272.7L969.7 279.6L979.7 286.5L989.4 293.6L998.8 300.7L1008.0 307.8L1017.0 315.1L1025.8 322.4L1034.3 329.7L1042.7 337.0L1050.8 344.4L1058.8 351.8L1066.5 359.2L1074.2 366.6L1081.6 374.0L1089.0 381.4L1096.2 388.8L1103.2 396.2L1110.2 403.5L1117.0 410.9L1123.7 418.3L1130.4 425.7L1136.9 433.0L1143.4 440.4L1149.8 447.7"/><path d="M757.0 195.0L777.4 193.7L797.9 193.3L818.4 194.0L838.7 195.6L858.9 198.1L878.8 201.6L898.3 206.0L917.4 211.1L936.1 217.0L954.2 223.6L971.7 230.8L988.7 238.5L1005.2 246.7L1021.0 255.3L1036.3 264.2L1051.0 273.4L1065.2 282.9L1078.9 292.5L1092.1 302.4L1104.8 312.3L1117.1 322.4L1129.0 332.5L1140.5 342.7L1151.6 352.9L1162.4 363.1L1172.9 373.4L1183.1 383.6L1193.1 393.8L1202.8 404.1L1212.3 414.3L1221.6 424.5L1230.8 434.7L1239.8 444.9L1248.6 455.0L1257.4 465.2L1266.0 475.3L1274.6 485.4L1283.1 495.5L1291.6 505.6L1300.0 515.7"/><path d="M757.0 195.0L739.8 209.5L723.7 224.1L708.7 238.8L694.5 253.5L681.3 268.1L668.7 282.6L656.9 297.1L645.6 311.4L634.9 325.5L624.7 339.5L615.0 353.3L605.6 367.0L596.5 380.6L587.8 394.0L579.3 407.3L571.1 420.5L563.1 433.6L555.2 446.6L547.5 459.6L539.9 472.4L532.4 485.2L525.0 498.0L517.6 510.8L510.3 523.5L502.9 536.2L495.5 549.0L488.1 561.8L480.6 574.6L473.0 587.4L465.3 600.4L457.5 613.4L449.5 626.4L441.2 639.6L432.8 652.9L424.1 666.4L415.1 679.9L405.7 693.6L396.0 707.4L385.8 721.4L375.2 735.5"/></g>
<g fill="#f07a55" fill-opacity="0.88" stroke="#fff" stroke-width="2.6"><circle cx="579.6" cy="45.8" r="7.4"/><circle cx="738.2" cy="91.9" r="7.4"/><circle cx="739.3" cy="107.7" r="7.4"/><circle cx="771.8" cy="91.9" r="7.4"/><circle cx="810.0" cy="97.2" r="7.4"/><circle cx="850.0" cy="91.0" r="7.4"/><circle cx="849.3" cy="102.3" r="7.4"/><circle cx="879.4" cy="97.7" r="7.4"/><circle cx="777.5" cy="119.7" r="7.4"/><circle cx="843.5" cy="127.3" r="7.4"/><circle cx="695.3" cy="125.5" r="7.4"/><circle cx="681.5" cy="138.9" r="7.4"/><circle cx="688.4" cy="137.8" r="7.4"/><circle cx="671.7" cy="151.7" r="7.4"/><circle cx="672.2" cy="164.4" r="7.4"/><circle cx="657.8" cy="170.2" r="7.4"/><circle cx="695.3" cy="162.1" r="7.4"/><circle cx="697.2" cy="171.3" r="7.4"/><circle cx="705.8" cy="182.9" r="7.4"/><circle cx="759.7" cy="139.6" r="7.4"/><circle cx="779.2" cy="140.8" r="7.4"/><circle cx="781.5" cy="153.3" r="7.4"/><circle cx="813.4" cy="153.5" r="7.4"/><circle cx="851.6" cy="151.7" r="7.4"/><circle cx="919.9" cy="141.7" r="7.4"/><circle cx="924.6" cy="143.6" r="7.4"/><circle cx="987.8" cy="141.7" r="7.4"/><circle cx="1025.3" cy="118.1" r="7.4"/><circle cx="827.3" cy="173.2" r="7.4"/><circle cx="882.9" cy="191.0" r="7.4"/><circle cx="735.9" cy="173.7" r="7.4"/><circle cx="750.9" cy="176.0" r="7.4"/><circle cx="763.6" cy="159.8" r="7.4"/><circle cx="774.1" cy="163.2" r="7.4"/><circle cx="783.3" cy="171.3" r="7.4"/><circle cx="732.4" cy="185.2" r="7.4"/><circle cx="746.3" cy="185.2" r="7.4"/><circle cx="771.8" cy="196.8" r="7.4"/><circle cx="776.4" cy="182.9" r="7.4"/><circle cx="788.0" cy="185.2" r="7.4"/><circle cx="790.3" cy="194.5" r="7.4"/><circle cx="722.0" cy="203.3" r="7.4"/><circle cx="819.2" cy="193.3" r="7.4"/><circle cx="818.1" cy="215.3" r="7.4"/><circle cx="760.2" cy="206.1" r="7.4"/><circle cx="761.3" cy="213.0" r="7.4"/><circle cx="782.2" cy="213.0" r="7.4"/><circle cx="801.9" cy="209.5" r="7.4"/><circle cx="796.1" cy="220.0" r="7.4"/><circle cx="741.7" cy="225.7" r="7.4"/><circle cx="734.7" cy="229.2" r="7.4"/><circle cx="752.1" cy="236.2" r="7.4"/><circle cx="760.2" cy="233.9" r="7.4"/><circle cx="777.5" cy="231.5" r="7.4"/><circle cx="771.8" cy="239.6" r="7.4"/><circle cx="799.5" cy="229.2" r="7.4"/><circle cx="796.1" cy="244.3" r="7.4"/><circle cx="812.3" cy="245.4" r="7.4"/><circle cx="823.8" cy="237.3" r="7.4"/><circle cx="703.4" cy="236.2" r="7.4"/><circle cx="715.0" cy="247.7" r="7.4"/><circle cx="690.7" cy="248.9" r="7.4"/><circle cx="697.7" cy="253.5" r="7.4"/><circle cx="738.2" cy="250.1" r="7.4"/><circle cx="749.8" cy="248.9" r="7.4"/><circle cx="856.3" cy="239.6" r="7.4"/><circle cx="842.4" cy="253.5" r="7.4"/><circle cx="831.9" cy="259.3" r="7.4"/><circle cx="837.7" cy="272.1" r="7.4"/><circle cx="660.2" cy="253.5" r="7.4"/><circle cx="657.8" cy="266.3" r="7.4"/><circle cx="656.0" cy="283.6" r="7.4"/><circle cx="660.6" cy="298.7" r="7.4"/><circle cx="673.3" cy="294.0" r="7.4"/><circle cx="682.6" cy="301.0" r="7.4"/><circle cx="687.2" cy="272.1" r="7.4"/><circle cx="705.8" cy="279.0" r="7.4"/><circle cx="716.2" cy="283.6" r="7.4"/><circle cx="719.7" cy="265.1" r="7.4"/><circle cx="725.4" cy="276.7" r="7.4"/><circle cx="761.3" cy="267.4" r="7.4"/><circle cx="777.5" cy="260.5" r="7.4"/><circle cx="789.1" cy="268.6" r="7.4"/><circle cx="804.2" cy="266.3" r="7.4"/><circle cx="819.2" cy="262.8" r="7.4"/><circle cx="725.4" cy="299.8" r="7.4"/><circle cx="764.8" cy="298.7" r="7.4"/><circle cx="782.2" cy="287.1" r="7.4"/><circle cx="793.7" cy="294.0" r="7.4"/><circle cx="789.1" cy="305.6" r="7.4"/><circle cx="843.5" cy="289.4" r="7.4"/><circle cx="851.6" cy="302.2" r="7.4"/><circle cx="871.3" cy="265.1" r="7.4"/><circle cx="895.6" cy="273.2" r="7.4"/><circle cx="884.0" cy="298.7" r="7.4"/><circle cx="899.1" cy="311.4" r="7.4"/><circle cx="909.5" cy="320.7" r="7.4"/><circle cx="904.9" cy="332.3" r="7.4"/><circle cx="911.8" cy="333.4" r="7.4"/><circle cx="885.2" cy="342.7" r="7.4"/><circle cx="959.3" cy="273.2" r="7.4"/><circle cx="991.7" cy="272.1" r="7.4"/><circle cx="958.1" cy="301.0" r="7.4"/><circle cx="1035.7" cy="289.4" r="7.4"/><circle cx="612.0" cy="325.3" r="7.4"/><circle cx="662.9" cy="320.7" r="7.4"/><circle cx="661.8" cy="333.4" r="7.4"/><circle cx="8.2" cy="201.8" r="7.4"/><circle cx="11.7" cy="291.7" r="7.4"/><circle cx="34.0" cy="318.0" r="7.4"/><circle cx="254.0" cy="247.6" r="7.4"/><circle cx="285.9" cy="269.9" r="7.4"/><circle cx="267.6" cy="284.0" r="7.4"/><circle cx="165.5" cy="345.0" r="7.4"/><circle cx="561.0" cy="291.7" r="7.4"/><circle cx="252.3" cy="371.6" r="7.4"/><circle cx="143.9" cy="411.5" r="7.4"/><circle cx="444.0" cy="662.0" r="7.4"/><circle cx="614.3" cy="358.1" r="7.4"/><circle cx="620.0" cy="358.0" r="7.4"/><circle cx="900.3" cy="363.9" r="7.4"/><circle cx="867.8" cy="677.9" r="7.4"/><circle cx="1053.7" cy="129.6" r="7.4"/><circle cx="1040.8" cy="289.3" r="7.4"/><circle cx="1145.6" cy="354.6" r="7.4"/><circle cx="1399.7" cy="337.9" r="7.4"/><circle cx="1504.0" cy="307.7" r="7.4"/><circle cx="1149.8" cy="447.7" r="7.4"/><circle cx="1300.0" cy="515.7" r="7.4"/><circle cx="757" cy="195" r="13" fill="#ef6330"/></g>
</svg><div id="zoomc"><div id="zin">+</div><div id="zout">−</div></div>
</div><div class="t " style="left:584px;top:1396.0px;font-size:18.8px;line-height:26px;color:#3b3c4d;font-weight:400;">Karte: © <span style="color:#1a7fa0">OpenStreetMap</span> © <span style="color:#1a7fa0">CARTO</span></div><div class="card" style="left:2088px;top:618px;width:750px;height:816px;overflow:hidden"><div class="t " style="left:76px;top:13.0px;font-size:27.5px;line-height:38px;color:#3b3c4d;font-weight:400;">Top Flughäfen</div><div style="position:absolute;left:0;top:66px;width:750px;height:100px;background:#e2e1e6"></div><div class="t " style="left:16px;top:99.5px;font-size:24px;line-height:33px;color:#3b3c4d;font-weight:400;letter-spacing:.5px;">FLUGHAFEN</div><div class="t " style="left:-467px;width:1200px;text-align:right;top:99.5px;font-size:24px;line-height:33px;color:#3b3c4d;font-weight:400;letter-spacing:.5px;">ANFLÜGE</div><div class="row" style="top:183px"><span class="code">FRA</span><span class="nm">Frankfurt am Main (DE)</span></div><div class="t " style="left:-465px;width:1200px;text-align:right;top:183.0px;font-size:24.5px;line-height:34px;color:#5f6270;font-weight:700;">1903</div><div style="position:absolute;left:0;top:234px;width:750px;height:2px;background:#e6e6eb"></div><div class="row" style="top:252px"><span class="code">TXL</span><span class="nm">Berlin (DE)</span></div><div class="t " style="left:-465px;width:1200px;text-align:right;top:252.0px;font-size:24.5px;line-height:34px;color:#5f6270;font-weight:700;">133</div><div style="position:absolute;left:0;top:303px;width:750px;height:2px;background:#e6e6eb"></div><div class="row" style="top:321px"><span class="code">MUC</span><span class="nm">Munich (DE)</span></div><div class="t " style="left:-465px;width:1200px;text-align:right;top:321.0px;font-size:24.5px;line-height:34px;color:#5f6270;font-weight:700;">133</div><div style="position:absolute;left:0;top:372px;width:750px;height:2px;background:#e6e6eb"></div><div class="row" style="top:390px"><span class="code">HAM</span><span class="nm">Hamburg (DE)</span></div><div class="t " style="left:-465px;width:1200px;text-align:right;top:390.0px;font-size:24.5px;line-height:34px;color:#5f6270;font-weight:700;">122</div><div style="position:absolute;left:0;top:441px;width:750px;height:2px;background:#e6e6eb"></div><div class="row" style="top:459px"><span class="code">LHR</span><span class="nm">London (GB)</span></div><div class="t " style="left:-465px;width:1200px;text-align:right;top:459.0px;font-size:24.5px;line-height:34px;color:#5f6270;font-weight:700;">114</div><div style="position:absolute;left:0;top:510px;width:750px;height:2px;background:#e6e6eb"></div><div class="row" style="top:528px"><span class="code">DUS</span><span class="nm">Düsseldorf (DE)</span></div><div class="t " style="left:-465px;width:1200px;text-align:right;top:528.0px;font-size:24.5px;line-height:34px;color:#5f6270;font-weight:700;">63</div><div style="position:absolute;left:0;top:579px;width:750px;height:2px;background:#e6e6eb"></div><div class="row" style="top:597px"><span class="code">CDG</span><span class="nm">Paris (Roissy-en-France, Val-d'Oise) (FR)</span></div><div class="t " style="left:-465px;width:1200px;text-align:right;top:597.0px;font-size:24.5px;line-height:34px;color:#5f6270;font-weight:700;">57</div><div style="position:absolute;left:0;top:648px;width:750px;height:2px;background:#e6e6eb"></div><div class="row" style="top:666px"><span class="code">BCN</span><span class="nm">Barcelona (ES)</span></div><div class="t " style="left:-465px;width:1200px;text-align:right;top:666.0px;font-size:24.5px;line-height:34px;color:#5f6270;font-weight:700;">54</div><div style="position:absolute;left:0;top:717px;width:750px;height:2px;background:#e6e6eb"></div><div class="row" style="top:735px"><span class="code">FCO</span><span class="nm">Rome (IT)</span></div><div class="t " style="left:-465px;width:1200px;text-align:right;top:735.0px;font-size:24.5px;line-height:34px;color:#5f6270;font-weight:700;">44</div><div style="position:absolute;left:0;top:786px;width:750px;height:2px;background:#e6e6eb"></div><div style="position:absolute;left:0;top:746px;width:750px;height:70px;background:#fff;border-top:2px solid #e3e3e8"></div><svg class="ic" style="left:253px;top:766px;width:22px;height:22px" viewBox="0 0 24 24" fill="none" stroke="#1a7fa0" stroke-width="2.4" stroke-linecap="round" stroke-linejoin="round"><path d="M6 9l6 6l6 -6"/></svg><div class="t " style="left:284px;top:764.0px;font-size:23px;line-height:32px;color:#1a7fa0;font-weight:400;">mehr... (132 weitere)</div></div><svg class="ic" style="left:2127px;top:632px;width:32px;height:32px" viewBox="0 0 24 24" fill="none" stroke="#3b3c4d" stroke-width="2.2" stroke-linecap="round" stroke-linejoin="round"><path d="M3 20h5"/><path d="M5 20v-8"/><path d="M9 20v-8"/><path d="M3.5 12h7l1 -3h-9z"/><path d="M5 9v-3h4v3"/><path d="M7 6v-3"/><path d="M13 4h6"/><path d="M17 2l2 2l-2 2"/></svg><div class="card" style="left:562px;top:1448px;width:2276px;height:420px"></div><svg class="ic" style="left:585px;top:1466px;width:26px;height:26px" viewBox="0 0 24 24" fill="none" stroke="#3b3c4d" stroke-width="2" stroke-linecap="round" stroke-linejoin="round"><path d="M3 13a1 1 0 0 1 1 -1h4a1 1 0 0 1 1 1v6a1 1 0 0 1 -1 1h-4a1 1 0 0 1 -1 -1z"/><path d="M15 9a1 1 0 0 1 1 -1h4a1 1 0 0 1 1 1v10a1 1 0 0 1 -1 1h-4a1 1 0 0 1 -1 -1z"/><path d="M9 5a1 1 0 0 1 1 -1h4a1 1 0 0 1 1 1v14a1 1 0 0 1 -1 1h-4a1 1 0 0 1 -1 -1z"/></svg><div class="t " style="left:617px;top:1463.5px;font-size:27px;line-height:37px;color:#3b3c4d;font-weight:400;">Flugstunden pro Jahr</div><div class="badge" style="left:1621px;top:1462px;width:156px;height:37px;background:#fd9d48;font-size:21.5px;line-height:37px">ø 515h / Jahr</div><svg style="position:absolute;left:0;top:0" width="2880" height="1800"><line x1="650" y1="1553.0" x2="2789" y2="1553.0" stroke="#e9e9ec" stroke-width="2" stroke-dasharray="6 6"/><text x="646" y="1561.0" text-anchor="end" font-size="22.5" fill="#4a4b57" font-family='"Liberation Sans", sans-serif'>800</text><line x1="650" y1="1639.0" x2="2789" y2="1639.0" stroke="#e9e9ec" stroke-width="2" stroke-dasharray="6 6"/><text x="646" y="1647.0" text-anchor="end" font-size="22.5" fill="#4a4b57" font-family='"Liberation Sans", sans-serif'>600</text><line x1="650" y1="1725.0" x2="2789" y2="1725.0" stroke="#e9e9ec" stroke-width="2" stroke-dasharray="6 6"/><text x="646" y="1733.0" text-anchor="end" font-size="22.5" fill="#4a4b57" font-family='"Liberation Sans", sans-serif'>400</text><path d="M811.2 1900V1647.2a6 6 0 0 1 6 -6h68a6 6 0 0 1 6 6V1900z" fill="#369fc3"/><text x="851.2" y="1779.6" text-anchor="middle" font-size="20.5" font-weight="700" fill="#fff" font-family='"Liberation Sans", sans-serif'>595</text><path d="M944.9 1900V1650.6a6 6 0 0 1 6 -6h68a6 6 0 0 1 6 6V1900z" fill="#369fc3"/><text x="984.9" y="1781.3" text-anchor="middle" font-size="20.5" font-weight="700" fill="#fff" font-family='"Liberation Sans", sans-serif'>587</text><path d="M1078.6 1900V1628.2a6 6 0 0 1 6 -6h68a6 6 0 0 1 6 6V1900z" fill="#369fc3"/><text x="1118.6" y="1770.1" text-anchor="middle" font-size="20.5" font-weight="700" fill="#fff" font-family='"Liberation Sans", sans-serif'>639</text><path d="M1212.3 1900V1597.7a6 6 0 0 1 6 -6h68a6 6 0 0 1 6 6V1900z" fill="#369fc3"/><text x="1252.3" y="1754.8" text-anchor="middle" font-size="20.5" font-weight="700" fill="#fff" font-family='"Liberation Sans", sans-serif'>710</text><path d="M1346.0 1900V1616.6a6 6 0 0 1 6 -6h68a6 6 0 0 1 6 6V1900z" fill="#369fc3"/><text x="1386.0" y="1764.3" text-anchor="middle" font-size="20.5" font-weight="700" fill="#fff" font-family='"Liberation Sans", sans-serif'>666</text><path d="M1479.7 1900V1594.3a6 6 0 0 1 6 -6h68a6 6 0 0 1 6 6V1900z" fill="#369fc3"/><text x="1519.7" y="1753.1" text-anchor="middle" font-size="20.5" font-weight="700" fill="#fff" font-family='"Liberation Sans", sans-serif'>718</text><path d="M1613.4 1900V1647.6a6 6 0 0 1 6 -6h68a6 6 0 0 1 6 6V1900z" fill="#369fc3"/><text x="1653.4" y="1779.8" text-anchor="middle" font-size="20.5" font-weight="700" fill="#fff" font-family='"Liberation Sans", sans-serif'>594</text><path d="M1747.1 1900V1622.6a6 6 0 0 1 6 -6h68a6 6 0 0 1 6 6V1900z" fill="#369fc3"/><text x="1787.1" y="1767.3" text-anchor="middle" font-size="20.5" font-weight="700" fill="#fff" font-family='"Liberation Sans", sans-serif'>652</text><path d="M1880.8 1900V1782.2a6 6 0 0 1 6 -6h68a6 6 0 0 1 6 6V1900z" fill="#369fc3"/><text x="1920.8" y="1847.1" text-anchor="middle" font-size="20.5" font-weight="700" fill="#fff" font-family='"Liberation Sans", sans-serif'>281</text><path d="M2014.5 1900V1786.0a6 6 0 0 1 6 -6h68a6 6 0 0 1 6 6V1900z" fill="#369fc3"/><text x="2054.5" y="1849.0" text-anchor="middle" font-size="20.5" font-weight="700" fill="#fff" font-family='"Liberation Sans", sans-serif'>272</text><path d="M2148.2 1900V1674.2a6 6 0 0 1 6 -6h68a6 6 0 0 1 6 6V1900z" fill="#369fc3"/><text x="2188.2" y="1793.1" text-anchor="middle" font-size="20.5" font-weight="700" fill="#fff" font-family='"Liberation Sans", sans-serif'>532</text><path d="M2281.9 1900V1644.1a6 6 0 0 1 6 -6h68a6 6 0 0 1 6 6V1900z" fill="#369fc3"/><text x="2321.9" y="1778.1" text-anchor="middle" font-size="20.5" font-weight="700" fill="#fff" font-family='"Liberation Sans", sans-serif'>602</text><path d="M2415.6 1900V1681.5a6 6 0 0 1 6 -6h68a6 6 0 0 1 6 6V1900z" fill="#369fc3"/><text x="2455.6" y="1796.8" text-anchor="middle" font-size="20.5" font-weight="700" fill="#fff" font-family='"Liberation Sans", sans-serif'>515</text><path d="M2549.3 1900V1580.1a6 6 0 0 1 6 -6h68a6 6 0 0 1 6 6V1900z" fill="#369fc3"/><text x="2589.3" y="1746.0" text-anchor="middle" font-size="20.5" font-weight="700" fill="#fff" font-family='"Liberation Sans", sans-serif'>751</text><line x1="650" y1="1675.5" x2="2789" y2="1675.5" stroke="#fd9d48" stroke-width="2.5" stroke-dasharray="11 9"/></svg></div><script>(function(){var s=window.innerWidth/2880;if(s>0&&Math.abs(s-1)>0.01){var r=document.getElementById("root");r.style.transform="scale("+s+")";}})();</script></body></html>
